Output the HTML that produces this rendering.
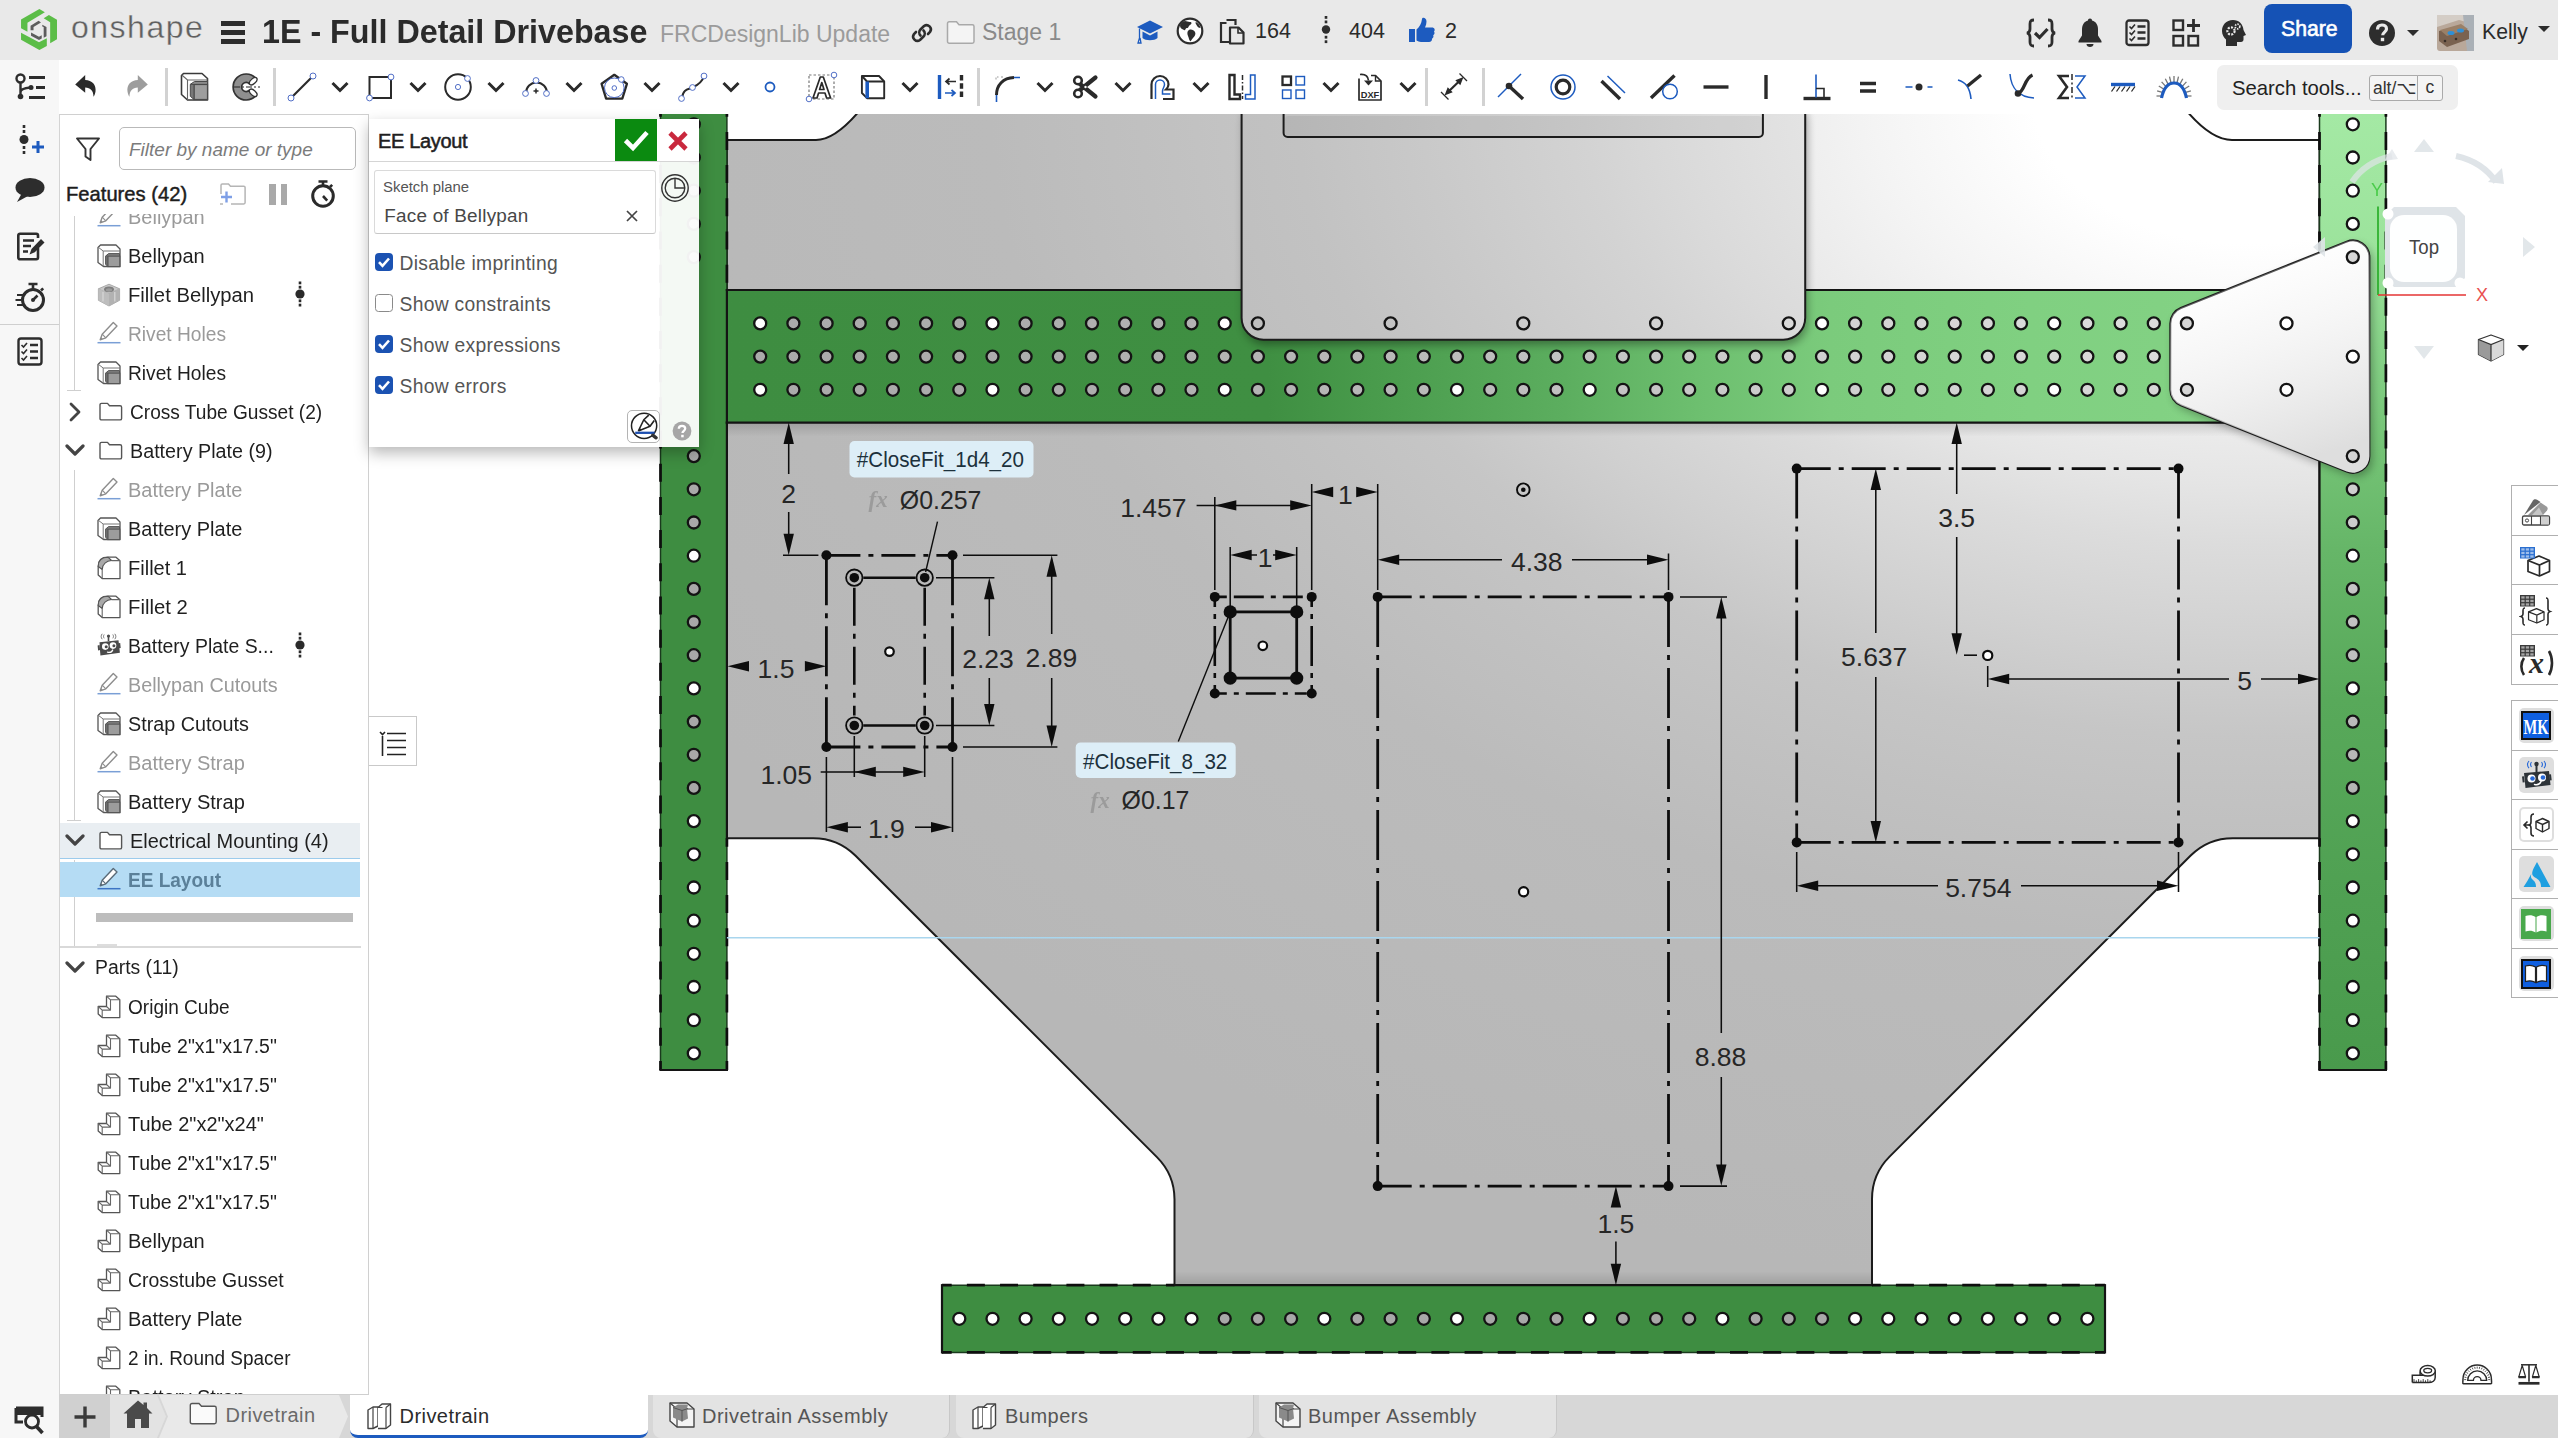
<!DOCTYPE html>
<html><head><meta charset="utf-8"><title>1E - Full Detail Drivebase</title>
<style>
*{box-sizing:border-box;margin:0;padding:0}
html,body{width:2558px;height:1438px;overflow:hidden;background:#fff;font-family:'Liberation Sans',sans-serif;color:#222;}
.abs{position:absolute}
.t{position:absolute;white-space:nowrap;line-height:1}
#hdr{position:absolute;left:0;top:0;width:2558px;height:60px;background:#e9e9e9}
#tb{position:absolute;left:59px;top:60px;width:2499px;height:54px;background:#fff}
#strip{position:absolute;left:0;top:60px;width:59px;height:1378px;background:#f7f7f7}
#panel{position:absolute;left:59px;top:114px;width:310px;height:1281px;background:#fff;border-left:1px solid #d4d4d4;border-right:1px solid #d0d0d0;border-top:1px solid #d0d0d0;border-bottom:1px solid #cfcfcf;overflow:hidden}
#tabs{position:absolute;left:59px;top:1395px;width:2499px;height:43px;background:#d7d7d7}
.row{position:absolute;left:0;width:310px;height:39px}
.row .lbl{position:absolute;left:68px;top:10.1px;font-size:20px;white-space:nowrap;line-height:1;color:#1f1f1f}
.row.f .lbl{left:69.5px}
.row.dim .lbl{color:#9a9a9a}
.row svg{position:absolute}
.ico{position:absolute}
.tab{position:absolute;top:0;height:43px;font-size:21.3px;color:#555}
</style></head>
<body>
<svg id="cv" width="2558" height="1438" viewBox="0 0 2558 1438" style="position:absolute;left:0;top:0">
<defs>
<radialGradient id="gGray" gradientUnits="userSpaceOnUse" cx="2250" cy="100" r="1200" gradientTransform="translate(2250,100) scale(1.5,1) translate(-2250,-100)">
<stop offset="0" stop-color="#ffffff"/><stop offset="0.12" stop-color="#ffffff"/><stop offset="0.21" stop-color="#f4f4f4"/><stop offset="0.32" stop-color="#e5e5e5"/><stop offset="0.37" stop-color="#dcdcdc"/><stop offset="0.46" stop-color="#d0d0d0"/><stop offset="0.53" stop-color="#c6c6c6"/><stop offset="0.6" stop-color="#c1c1c1"/><stop offset="0.7" stop-color="#bbbbbb"/><stop offset="1" stop-color="#b7b7b7"/>
</radialGradient>
<radialGradient id="gPlate" gradientUnits="userSpaceOnUse" cx="2250" cy="100" r="1200" gradientTransform="translate(2250,100) scale(1.5,1) translate(-2250,-100)">
<stop offset="0" stop-color="#f8f8f8"/><stop offset="0.12" stop-color="#f4f4f4"/><stop offset="0.21" stop-color="#e8e8e8"/><stop offset="0.32" stop-color="#dadada"/><stop offset="0.37" stop-color="#d3d3d3"/><stop offset="0.46" stop-color="#c9c9c9"/><stop offset="0.53" stop-color="#c2c2c2"/><stop offset="0.6" stop-color="#bebebe"/><stop offset="0.7" stop-color="#bababa"/><stop offset="1" stop-color="#b7b7b7"/>
</radialGradient>
<radialGradient id="gGreen" gradientUnits="userSpaceOnUse" cx="2300" cy="100" r="1050">
<stop offset="0" stop-color="#a8eea8"/><stop offset="0.095" stop-color="#a2e8a2"/><stop offset="0.196" stop-color="#8ed88e"/><stop offset="0.283" stop-color="#80d080"/><stop offset="0.33" stop-color="#74c476"/><stop offset="0.48" stop-color="#64b566"/><stop offset="0.535" stop-color="#5eae60"/><stop offset="0.72" stop-color="#4fa052"/><stop offset="0.877" stop-color="#459648"/><stop offset="1" stop-color="#3e8d41"/>
</radialGradient>
<radialGradient id="gHole" gradientUnits="userSpaceOnUse" cx="2250" cy="100" r="1200" gradientTransform="translate(2250,100) scale(1.5,1) translate(-2250,-100)">
<stop offset="0" stop-color="#e6e6e6"/><stop offset="0.2" stop-color="#dcdcdc"/><stop offset="0.35" stop-color="#cdcdcd"/><stop offset="0.5" stop-color="#bbbbbb"/><stop offset="0.7" stop-color="#adadad"/><stop offset="1" stop-color="#a8a8a8"/>
</radialGradient>
<linearGradient id="gCross" x1="0" y1="0" x2="1" y2="0">
<stop offset="0" stop-color="#3e8d41"/><stop offset="0.34" stop-color="#3f8f42"/><stop offset="0.40" stop-color="#489a4b"/><stop offset="0.526" stop-color="#5cae5f"/><stop offset="0.609" stop-color="#6dbf6f"/><stop offset="0.693" stop-color="#7bcb7c"/><stop offset="0.818" stop-color="#80d081"/><stop offset="0.9" stop-color="#82d183"/><stop offset="1" stop-color="#88d688"/>
</linearGradient>
<linearGradient id="gRightT" x1="0" y1="0" x2="0" y2="1">
<stop offset="0" stop-color="#a6eaa6"/><stop offset="0.024" stop-color="#a4e9a4"/><stop offset="0.163" stop-color="#9ce39c"/><stop offset="0.265" stop-color="#86d287"/><stop offset="0.367" stop-color="#74c375"/><stop offset="0.469" stop-color="#66b668"/><stop offset="0.622" stop-color="#58a95a"/><stop offset="0.827" stop-color="#4fa052"/><stop offset="1" stop-color="#499a4c"/>
</linearGradient>
<filter id="sh" x="-5%" y="-5%" width="110%" height="120%"><feGaussianBlur stdDeviation="4"/></filter>
<clipPath id="cvclip"><rect x="369" y="114" width="2189" height="1281"/></clipPath>
<linearGradient id="gGus" x1="0.2" y1="0" x2="0.5" y2="1"><stop offset="0" stop-color="#fff" stop-opacity="0"/><stop offset="0.35" stop-color="#f4f4f4" stop-opacity="0.5"/><stop offset="1" stop-color="#dedede" stop-opacity="1"/></linearGradient><linearGradient id="gShV" x1="0" y1="0" x2="0" y2="1"><stop offset="0" stop-color="#000" stop-opacity="0"/><stop offset="1" stop-color="#000" stop-opacity="0.13"/></linearGradient><linearGradient id="gShV2" x1="0" y1="0" x2="0" y2="1"><stop offset="0" stop-color="#000" stop-opacity="0.14"/><stop offset="1" stop-color="#000" stop-opacity="0"/></linearGradient></defs>
<g clip-path="url(#cvclip)">
<rect x="369" y="114" width="2189" height="1281" fill="#ffffff"/>
<path d="M726.9,140.0 L816,140.0 Q838,140.0 868,100 L2178,100 Q2208,140.0 2232,140.0 L2319.5,140.0 L2319.5,838.2 L2232.8528137423855,838.2 A60.0,60.0 0 0 0 2190.4264068711927,855.7735931288072 L1889.5735931288073,1156.626406871193 A60.0,60.0 0 0 0 1872.0,1199.0528137423858 L1872.0,1290.2 L1174.5,1290.2 L1174.5,1199.5528137423858 A60.0,60.0 0 0 0 1156.9264068711927,1157.126406871193 L855.5735931288071,855.7735931288072 A60.0,60.0 0 0 0 813.1471862576143,838.2 L726.9,838.2Z" fill="url(#gGray)" stroke="#1c1c1c" stroke-width="2"/>
<rect x="726.9" y="422.6" width="1592.6" height="14" fill="url(#gShV2)"/>
<rect x="1175.5" y="1271.2" width="695.5" height="14" fill="url(#gShV)"/>
<rect x="660.5" y="90.0" width="66.4" height="980.0" fill="#3e8d41"/>
<line x1="660.5" y1="90.0" x2="660.5" y2="1070.0" stroke="#1a3a1d" stroke-width="1.5"/>
<line x1="660.5" y1="90.0" x2="660.5" y2="1070.0" stroke="#0e0e0e" stroke-width="2.7" stroke-dasharray="18 15.18" stroke-dashoffset="24.43"/>
<line x1="726.9" y1="90.0" x2="726.9" y2="290.0" stroke="#1a3a1d" stroke-width="1.5"/>
<line x1="726.9" y1="90.0" x2="726.9" y2="290.0" stroke="#0e0e0e" stroke-width="2.7" stroke-dasharray="18 15.18" stroke-dashoffset="24.43"/>
<line x1="726.9" y1="422.6" x2="726.9" y2="838.2" stroke="#141414" stroke-width="2.2" stroke-linecap="square"/>
<line x1="726.9" y1="838.2" x2="726.9" y2="1070.0" stroke="#1a3a1d" stroke-width="1.5"/>
<line x1="726.9" y1="838.2" x2="726.9" y2="1070.0" stroke="#0e0e0e" stroke-width="2.7" stroke-dasharray="18 15.18" stroke-dashoffset="9.49"/>
<line x1="660.5" y1="1070.0" x2="726.9" y2="1070.0" stroke="#141414" stroke-width="2.2" stroke-linecap="square"/>
<rect x="2319.5" y="90.0" width="66.4" height="980.0" fill="url(#gRightT)"/>
<line x1="2385.9" y1="90.0" x2="2385.9" y2="1070.0" stroke="#1a3a1d" stroke-width="1.5"/>
<line x1="2385.9" y1="90.0" x2="2385.9" y2="1070.0" stroke="#0e0e0e" stroke-width="2.7" stroke-dasharray="18 15.18" stroke-dashoffset="24.43"/>
<line x1="2319.5" y1="90.0" x2="2319.5" y2="290.0" stroke="#1a3a1d" stroke-width="1.5"/>
<line x1="2319.5" y1="90.0" x2="2319.5" y2="290.0" stroke="#0e0e0e" stroke-width="2.7" stroke-dasharray="18 15.18" stroke-dashoffset="24.43"/>
<line x1="2319.5" y1="422.6" x2="2319.5" y2="838.2" stroke="#141414" stroke-width="2.2" stroke-linecap="square"/>
<line x1="2319.5" y1="838.2" x2="2319.5" y2="1070.0" stroke="#1a3a1d" stroke-width="1.5"/>
<line x1="2319.5" y1="838.2" x2="2319.5" y2="1070.0" stroke="#0e0e0e" stroke-width="2.7" stroke-dasharray="18 15.18" stroke-dashoffset="9.49"/>
<line x1="2319.5" y1="1070.0" x2="2385.9" y2="1070.0" stroke="#141414" stroke-width="2.2" stroke-linecap="square"/>
<rect x="726.9" y="290.0" width="1592.6" height="132.6" fill="url(#gCross)"/>
<line x1="726.9" y1="290.0" x2="2319.5" y2="290.0" stroke="#141414" stroke-width="2.2" stroke-linecap="square"/>
<line x1="726.9" y1="422.6" x2="2319.5" y2="422.6" stroke="#141414" stroke-width="2.2" stroke-linecap="square"/>
<line x1="726.9" y1="290.0" x2="726.9" y2="422.6" stroke="#141414" stroke-width="2.2" stroke-linecap="square"/>
<line x1="2319.5" y1="290.0" x2="2319.5" y2="422.6" stroke="#141414" stroke-width="2.2" stroke-linecap="square"/>
<rect x="942.0" y="1285.2" width="1163.0" height="67.2" fill="#3e8d41"/>
<line x1="942.0" y1="1285.2" x2="1174.5" y2="1285.2" stroke="#1a3a1d" stroke-width="1.5"/>
<line x1="942.0" y1="1285.2" x2="1174.5" y2="1285.2" stroke="#0e0e0e" stroke-width="2.7" stroke-dasharray="18 15.18" stroke-dashoffset="8.31"/>
<line x1="1174.5" y1="1285.2" x2="1872.0" y2="1285.2" stroke="#141414" stroke-width="2.2" stroke-linecap="square"/>
<line x1="1872.0" y1="1285.2" x2="2105.0" y2="1285.2" stroke="#1a3a1d" stroke-width="1.5"/>
<line x1="1872.0" y1="1285.2" x2="2105.0" y2="1285.2" stroke="#0e0e0e" stroke-width="2.7" stroke-dasharray="18 15.18" stroke-dashoffset="9.27"/>
<line x1="942.0" y1="1352.4" x2="2105.0" y2="1352.4" stroke="#1a3a1d" stroke-width="1.5"/>
<line x1="942.0" y1="1352.4" x2="2105.0" y2="1352.4" stroke="#0e0e0e" stroke-width="2.7" stroke-dasharray="18 15.18" stroke-dashoffset="8.31"/>
<line x1="942.0" y1="1285.2" x2="942.0" y2="1352.4" stroke="#141414" stroke-width="2.2" stroke-linecap="square"/>
<line x1="2105.0" y1="1285.2" x2="2105.0" y2="1352.4" stroke="#141414" stroke-width="2.2" stroke-linecap="square"/>
<rect x="1243.6" y="100" width="563.6000000000001" height="244.7" rx="22" fill="#000" opacity="0.35" filter="url(#sh)"/>
<rect x="1241.6" y="60" width="563.6000000000001" height="279.7" rx="22" fill="url(#gPlate)" stroke="#1c1c1c" stroke-width="2"/>
<rect x="1283.6" y="60" width="479.3000000000002" height="77" rx="4" fill="url(#gPlate)" stroke="#1c1c1c" stroke-width="2"/>
<rect x="1285" y="116" width="477" height="20" rx="3" fill="#000" opacity="0.06"/>
<circle cx="760.2" cy="323.4" r="6.0" fill="#ffffff" stroke="#141414" stroke-width="2.3"/>
<circle cx="793.4" cy="323.4" r="6.0" fill="url(#gHole)" stroke="#141414" stroke-width="2.3"/>
<circle cx="826.6" cy="323.4" r="6.0" fill="url(#gHole)" stroke="#141414" stroke-width="2.3"/>
<circle cx="859.7" cy="323.4" r="6.0" fill="url(#gHole)" stroke="#141414" stroke-width="2.3"/>
<circle cx="892.9" cy="323.4" r="6.0" fill="url(#gHole)" stroke="#141414" stroke-width="2.3"/>
<circle cx="926.1" cy="323.4" r="6.0" fill="url(#gHole)" stroke="#141414" stroke-width="2.3"/>
<circle cx="959.3" cy="323.4" r="6.0" fill="url(#gHole)" stroke="#141414" stroke-width="2.3"/>
<circle cx="992.5" cy="323.4" r="6.0" fill="#ffffff" stroke="#141414" stroke-width="2.3"/>
<circle cx="1025.6" cy="323.4" r="6.0" fill="url(#gHole)" stroke="#141414" stroke-width="2.3"/>
<circle cx="1058.8" cy="323.4" r="6.0" fill="url(#gHole)" stroke="#141414" stroke-width="2.3"/>
<circle cx="1092.0" cy="323.4" r="6.0" fill="url(#gHole)" stroke="#141414" stroke-width="2.3"/>
<circle cx="1125.2" cy="323.4" r="6.0" fill="url(#gHole)" stroke="#141414" stroke-width="2.3"/>
<circle cx="1158.4" cy="323.4" r="6.0" fill="url(#gHole)" stroke="#141414" stroke-width="2.3"/>
<circle cx="1191.5" cy="323.4" r="6.0" fill="url(#gHole)" stroke="#141414" stroke-width="2.3"/>
<circle cx="1224.7" cy="323.4" r="6.0" fill="#ffffff" stroke="#141414" stroke-width="2.3"/>
<circle cx="1822.0" cy="323.4" r="6.0" fill="#ffffff" stroke="#141414" stroke-width="2.3"/>
<circle cx="1855.1" cy="323.4" r="6.0" fill="url(#gHole)" stroke="#141414" stroke-width="2.3"/>
<circle cx="1888.3" cy="323.4" r="6.0" fill="url(#gHole)" stroke="#141414" stroke-width="2.3"/>
<circle cx="1921.5" cy="323.4" r="6.0" fill="url(#gHole)" stroke="#141414" stroke-width="2.3"/>
<circle cx="1954.7" cy="323.4" r="6.0" fill="url(#gHole)" stroke="#141414" stroke-width="2.3"/>
<circle cx="1987.9" cy="323.4" r="6.0" fill="url(#gHole)" stroke="#141414" stroke-width="2.3"/>
<circle cx="2021.0" cy="323.4" r="6.0" fill="url(#gHole)" stroke="#141414" stroke-width="2.3"/>
<circle cx="2054.2" cy="323.4" r="6.0" fill="#ffffff" stroke="#141414" stroke-width="2.3"/>
<circle cx="2087.4" cy="323.4" r="6.0" fill="url(#gHole)" stroke="#141414" stroke-width="2.3"/>
<circle cx="2120.6" cy="323.4" r="6.0" fill="url(#gHole)" stroke="#141414" stroke-width="2.3"/>
<circle cx="2153.8" cy="323.4" r="6.0" fill="url(#gHole)" stroke="#141414" stroke-width="2.3"/>
<circle cx="760.2" cy="356.6" r="6.0" fill="url(#gHole)" stroke="#141414" stroke-width="2.3"/>
<circle cx="793.4" cy="356.6" r="6.0" fill="url(#gHole)" stroke="#141414" stroke-width="2.3"/>
<circle cx="826.6" cy="356.6" r="6.0" fill="url(#gHole)" stroke="#141414" stroke-width="2.3"/>
<circle cx="859.7" cy="356.6" r="6.0" fill="url(#gHole)" stroke="#141414" stroke-width="2.3"/>
<circle cx="892.9" cy="356.6" r="6.0" fill="url(#gHole)" stroke="#141414" stroke-width="2.3"/>
<circle cx="926.1" cy="356.6" r="6.0" fill="url(#gHole)" stroke="#141414" stroke-width="2.3"/>
<circle cx="959.3" cy="356.6" r="6.0" fill="url(#gHole)" stroke="#141414" stroke-width="2.3"/>
<circle cx="992.5" cy="356.6" r="6.0" fill="url(#gHole)" stroke="#141414" stroke-width="2.3"/>
<circle cx="1025.6" cy="356.6" r="6.0" fill="url(#gHole)" stroke="#141414" stroke-width="2.3"/>
<circle cx="1058.8" cy="356.6" r="6.0" fill="url(#gHole)" stroke="#141414" stroke-width="2.3"/>
<circle cx="1092.0" cy="356.6" r="6.0" fill="url(#gHole)" stroke="#141414" stroke-width="2.3"/>
<circle cx="1125.2" cy="356.6" r="6.0" fill="url(#gHole)" stroke="#141414" stroke-width="2.3"/>
<circle cx="1158.4" cy="356.6" r="6.0" fill="url(#gHole)" stroke="#141414" stroke-width="2.3"/>
<circle cx="1191.5" cy="356.6" r="6.0" fill="url(#gHole)" stroke="#141414" stroke-width="2.3"/>
<circle cx="1224.7" cy="356.6" r="6.0" fill="url(#gHole)" stroke="#141414" stroke-width="2.3"/>
<circle cx="1257.9" cy="356.6" r="6.0" fill="url(#gHole)" stroke="#141414" stroke-width="2.3"/>
<circle cx="1291.1" cy="356.6" r="6.0" fill="url(#gHole)" stroke="#141414" stroke-width="2.3"/>
<circle cx="1324.3" cy="356.6" r="6.0" fill="url(#gHole)" stroke="#141414" stroke-width="2.3"/>
<circle cx="1357.4" cy="356.6" r="6.0" fill="url(#gHole)" stroke="#141414" stroke-width="2.3"/>
<circle cx="1390.6" cy="356.6" r="6.0" fill="url(#gHole)" stroke="#141414" stroke-width="2.3"/>
<circle cx="1423.8" cy="356.6" r="6.0" fill="url(#gHole)" stroke="#141414" stroke-width="2.3"/>
<circle cx="1457.0" cy="356.6" r="6.0" fill="url(#gHole)" stroke="#141414" stroke-width="2.3"/>
<circle cx="1490.2" cy="356.6" r="6.0" fill="url(#gHole)" stroke="#141414" stroke-width="2.3"/>
<circle cx="1523.3" cy="356.6" r="6.0" fill="url(#gHole)" stroke="#141414" stroke-width="2.3"/>
<circle cx="1556.5" cy="356.6" r="6.0" fill="url(#gHole)" stroke="#141414" stroke-width="2.3"/>
<circle cx="1589.7" cy="356.6" r="6.0" fill="url(#gHole)" stroke="#141414" stroke-width="2.3"/>
<circle cx="1622.9" cy="356.6" r="6.0" fill="url(#gHole)" stroke="#141414" stroke-width="2.3"/>
<circle cx="1656.1" cy="356.6" r="6.0" fill="url(#gHole)" stroke="#141414" stroke-width="2.3"/>
<circle cx="1689.2" cy="356.6" r="6.0" fill="url(#gHole)" stroke="#141414" stroke-width="2.3"/>
<circle cx="1722.4" cy="356.6" r="6.0" fill="url(#gHole)" stroke="#141414" stroke-width="2.3"/>
<circle cx="1755.6" cy="356.6" r="6.0" fill="url(#gHole)" stroke="#141414" stroke-width="2.3"/>
<circle cx="1788.8" cy="356.6" r="6.0" fill="url(#gHole)" stroke="#141414" stroke-width="2.3"/>
<circle cx="1822.0" cy="356.6" r="6.0" fill="url(#gHole)" stroke="#141414" stroke-width="2.3"/>
<circle cx="1855.1" cy="356.6" r="6.0" fill="url(#gHole)" stroke="#141414" stroke-width="2.3"/>
<circle cx="1888.3" cy="356.6" r="6.0" fill="url(#gHole)" stroke="#141414" stroke-width="2.3"/>
<circle cx="1921.5" cy="356.6" r="6.0" fill="url(#gHole)" stroke="#141414" stroke-width="2.3"/>
<circle cx="1954.7" cy="356.6" r="6.0" fill="url(#gHole)" stroke="#141414" stroke-width="2.3"/>
<circle cx="1987.9" cy="356.6" r="6.0" fill="url(#gHole)" stroke="#141414" stroke-width="2.3"/>
<circle cx="2021.0" cy="356.6" r="6.0" fill="url(#gHole)" stroke="#141414" stroke-width="2.3"/>
<circle cx="2054.2" cy="356.6" r="6.0" fill="url(#gHole)" stroke="#141414" stroke-width="2.3"/>
<circle cx="2087.4" cy="356.6" r="6.0" fill="url(#gHole)" stroke="#141414" stroke-width="2.3"/>
<circle cx="2120.6" cy="356.6" r="6.0" fill="url(#gHole)" stroke="#141414" stroke-width="2.3"/>
<circle cx="2153.8" cy="356.6" r="6.0" fill="url(#gHole)" stroke="#141414" stroke-width="2.3"/>
<circle cx="760.2" cy="389.8" r="6.0" fill="#ffffff" stroke="#141414" stroke-width="2.3"/>
<circle cx="793.4" cy="389.8" r="6.0" fill="url(#gHole)" stroke="#141414" stroke-width="2.3"/>
<circle cx="826.6" cy="389.8" r="6.0" fill="url(#gHole)" stroke="#141414" stroke-width="2.3"/>
<circle cx="859.7" cy="389.8" r="6.0" fill="url(#gHole)" stroke="#141414" stroke-width="2.3"/>
<circle cx="892.9" cy="389.8" r="6.0" fill="url(#gHole)" stroke="#141414" stroke-width="2.3"/>
<circle cx="926.1" cy="389.8" r="6.0" fill="url(#gHole)" stroke="#141414" stroke-width="2.3"/>
<circle cx="959.3" cy="389.8" r="6.0" fill="url(#gHole)" stroke="#141414" stroke-width="2.3"/>
<circle cx="992.5" cy="389.8" r="6.0" fill="#ffffff" stroke="#141414" stroke-width="2.3"/>
<circle cx="1025.6" cy="389.8" r="6.0" fill="url(#gHole)" stroke="#141414" stroke-width="2.3"/>
<circle cx="1058.8" cy="389.8" r="6.0" fill="url(#gHole)" stroke="#141414" stroke-width="2.3"/>
<circle cx="1092.0" cy="389.8" r="6.0" fill="url(#gHole)" stroke="#141414" stroke-width="2.3"/>
<circle cx="1125.2" cy="389.8" r="6.0" fill="url(#gHole)" stroke="#141414" stroke-width="2.3"/>
<circle cx="1158.4" cy="389.8" r="6.0" fill="url(#gHole)" stroke="#141414" stroke-width="2.3"/>
<circle cx="1191.5" cy="389.8" r="6.0" fill="url(#gHole)" stroke="#141414" stroke-width="2.3"/>
<circle cx="1224.7" cy="389.8" r="6.0" fill="#ffffff" stroke="#141414" stroke-width="2.3"/>
<circle cx="1257.9" cy="389.8" r="6.0" fill="url(#gHole)" stroke="#141414" stroke-width="2.3"/>
<circle cx="1291.1" cy="389.8" r="6.0" fill="url(#gHole)" stroke="#141414" stroke-width="2.3"/>
<circle cx="1324.3" cy="389.8" r="6.0" fill="url(#gHole)" stroke="#141414" stroke-width="2.3"/>
<circle cx="1357.4" cy="389.8" r="6.0" fill="url(#gHole)" stroke="#141414" stroke-width="2.3"/>
<circle cx="1390.6" cy="389.8" r="6.0" fill="url(#gHole)" stroke="#141414" stroke-width="2.3"/>
<circle cx="1423.8" cy="389.8" r="6.0" fill="url(#gHole)" stroke="#141414" stroke-width="2.3"/>
<circle cx="1457.0" cy="389.8" r="6.0" fill="#ffffff" stroke="#141414" stroke-width="2.3"/>
<circle cx="1490.2" cy="389.8" r="6.0" fill="url(#gHole)" stroke="#141414" stroke-width="2.3"/>
<circle cx="1523.3" cy="389.8" r="6.0" fill="url(#gHole)" stroke="#141414" stroke-width="2.3"/>
<circle cx="1556.5" cy="389.8" r="6.0" fill="url(#gHole)" stroke="#141414" stroke-width="2.3"/>
<circle cx="1589.7" cy="389.8" r="6.0" fill="#ffffff" stroke="#141414" stroke-width="2.3"/>
<circle cx="1622.9" cy="389.8" r="6.0" fill="url(#gHole)" stroke="#141414" stroke-width="2.3"/>
<circle cx="1656.1" cy="389.8" r="6.0" fill="url(#gHole)" stroke="#141414" stroke-width="2.3"/>
<circle cx="1689.2" cy="389.8" r="6.0" fill="url(#gHole)" stroke="#141414" stroke-width="2.3"/>
<circle cx="1722.4" cy="389.8" r="6.0" fill="url(#gHole)" stroke="#141414" stroke-width="2.3"/>
<circle cx="1755.6" cy="389.8" r="6.0" fill="url(#gHole)" stroke="#141414" stroke-width="2.3"/>
<circle cx="1788.8" cy="389.8" r="6.0" fill="url(#gHole)" stroke="#141414" stroke-width="2.3"/>
<circle cx="1822.0" cy="389.8" r="6.0" fill="#ffffff" stroke="#141414" stroke-width="2.3"/>
<circle cx="1855.1" cy="389.8" r="6.0" fill="url(#gHole)" stroke="#141414" stroke-width="2.3"/>
<circle cx="1888.3" cy="389.8" r="6.0" fill="url(#gHole)" stroke="#141414" stroke-width="2.3"/>
<circle cx="1921.5" cy="389.8" r="6.0" fill="url(#gHole)" stroke="#141414" stroke-width="2.3"/>
<circle cx="1954.7" cy="389.8" r="6.0" fill="url(#gHole)" stroke="#141414" stroke-width="2.3"/>
<circle cx="1987.9" cy="389.8" r="6.0" fill="url(#gHole)" stroke="#141414" stroke-width="2.3"/>
<circle cx="2021.0" cy="389.8" r="6.0" fill="url(#gHole)" stroke="#141414" stroke-width="2.3"/>
<circle cx="2054.2" cy="389.8" r="6.0" fill="#ffffff" stroke="#141414" stroke-width="2.3"/>
<circle cx="2087.4" cy="389.8" r="6.0" fill="url(#gHole)" stroke="#141414" stroke-width="2.3"/>
<circle cx="2120.6" cy="389.8" r="6.0" fill="url(#gHole)" stroke="#141414" stroke-width="2.3"/>
<circle cx="2153.8" cy="389.8" r="6.0" fill="url(#gHole)" stroke="#141414" stroke-width="2.3"/>
<circle cx="1257.9" cy="323.4" r="6.0" fill="url(#gPlate)" stroke="#141414" stroke-width="2.3"/>
<circle cx="1390.6" cy="323.4" r="6.0" fill="url(#gPlate)" stroke="#141414" stroke-width="2.3"/>
<circle cx="1523.3" cy="323.4" r="6.0" fill="url(#gPlate)" stroke="#141414" stroke-width="2.3"/>
<circle cx="1656.1" cy="323.4" r="6.0" fill="url(#gPlate)" stroke="#141414" stroke-width="2.3"/>
<circle cx="1788.8" cy="323.4" r="6.0" fill="url(#gPlate)" stroke="#141414" stroke-width="2.3"/>
<circle cx="693.8" cy="124.3" r="6.0" fill="url(#gHole)" stroke="#141414" stroke-width="2.3"/>
<circle cx="2352.8" cy="124.3" r="6.0" fill="#ffffff" stroke="#141414" stroke-width="2.3"/>
<circle cx="693.8" cy="157.5" r="6.0" fill="url(#gHole)" stroke="#141414" stroke-width="2.3"/>
<circle cx="2352.8" cy="157.5" r="6.0" fill="#ffffff" stroke="#141414" stroke-width="2.3"/>
<circle cx="693.8" cy="190.7" r="6.0" fill="url(#gHole)" stroke="#141414" stroke-width="2.3"/>
<circle cx="2352.8" cy="190.7" r="6.0" fill="#ffffff" stroke="#141414" stroke-width="2.3"/>
<circle cx="693.8" cy="223.9" r="6.0" fill="url(#gHole)" stroke="#141414" stroke-width="2.3"/>
<circle cx="2352.8" cy="223.9" r="6.0" fill="#ffffff" stroke="#141414" stroke-width="2.3"/>
<circle cx="693.8" cy="257.1" r="6.0" fill="url(#gHole)" stroke="#141414" stroke-width="2.3"/>
<circle cx="693.8" cy="456.1" r="6.0" fill="url(#gHole)" stroke="#141414" stroke-width="2.3"/>
<circle cx="693.8" cy="489.3" r="6.0" fill="url(#gHole)" stroke="#141414" stroke-width="2.3"/>
<circle cx="2352.8" cy="489.3" r="6.0" fill="url(#gHole)" stroke="#141414" stroke-width="2.3"/>
<circle cx="693.8" cy="522.5" r="6.0" fill="url(#gHole)" stroke="#141414" stroke-width="2.3"/>
<circle cx="2352.8" cy="522.5" r="6.0" fill="url(#gHole)" stroke="#141414" stroke-width="2.3"/>
<circle cx="693.8" cy="555.7" r="6.0" fill="#ffffff" stroke="#141414" stroke-width="2.3"/>
<circle cx="2352.8" cy="555.7" r="6.0" fill="#ffffff" stroke="#141414" stroke-width="2.3"/>
<circle cx="693.8" cy="588.9" r="6.0" fill="url(#gHole)" stroke="#141414" stroke-width="2.3"/>
<circle cx="2352.8" cy="588.9" r="6.0" fill="url(#gHole)" stroke="#141414" stroke-width="2.3"/>
<circle cx="693.8" cy="622.0" r="6.0" fill="url(#gHole)" stroke="#141414" stroke-width="2.3"/>
<circle cx="2352.8" cy="622.0" r="6.0" fill="url(#gHole)" stroke="#141414" stroke-width="2.3"/>
<circle cx="693.8" cy="655.2" r="6.0" fill="url(#gHole)" stroke="#141414" stroke-width="2.3"/>
<circle cx="2352.8" cy="655.2" r="6.0" fill="url(#gHole)" stroke="#141414" stroke-width="2.3"/>
<circle cx="693.8" cy="688.4" r="6.0" fill="#ffffff" stroke="#141414" stroke-width="2.3"/>
<circle cx="2352.8" cy="688.4" r="6.0" fill="#ffffff" stroke="#141414" stroke-width="2.3"/>
<circle cx="693.8" cy="721.6" r="6.0" fill="url(#gHole)" stroke="#141414" stroke-width="2.3"/>
<circle cx="2352.8" cy="721.6" r="6.0" fill="url(#gHole)" stroke="#141414" stroke-width="2.3"/>
<circle cx="693.8" cy="754.8" r="6.0" fill="url(#gHole)" stroke="#141414" stroke-width="2.3"/>
<circle cx="2352.8" cy="754.8" r="6.0" fill="url(#gHole)" stroke="#141414" stroke-width="2.3"/>
<circle cx="693.8" cy="787.9" r="6.0" fill="url(#gHole)" stroke="#141414" stroke-width="2.3"/>
<circle cx="2352.8" cy="787.9" r="6.0" fill="url(#gHole)" stroke="#141414" stroke-width="2.3"/>
<circle cx="693.8" cy="821.1" r="6.0" fill="#ffffff" stroke="#141414" stroke-width="2.3"/>
<circle cx="2352.8" cy="821.1" r="6.0" fill="#ffffff" stroke="#141414" stroke-width="2.3"/>
<circle cx="693.8" cy="854.3" r="6.0" fill="#ffffff" stroke="#141414" stroke-width="2.3"/>
<circle cx="2352.8" cy="854.3" r="6.0" fill="#ffffff" stroke="#141414" stroke-width="2.3"/>
<circle cx="693.8" cy="887.5" r="6.0" fill="#ffffff" stroke="#141414" stroke-width="2.3"/>
<circle cx="2352.8" cy="887.5" r="6.0" fill="#ffffff" stroke="#141414" stroke-width="2.3"/>
<circle cx="693.8" cy="920.7" r="6.0" fill="#ffffff" stroke="#141414" stroke-width="2.3"/>
<circle cx="2352.8" cy="920.7" r="6.0" fill="#ffffff" stroke="#141414" stroke-width="2.3"/>
<circle cx="693.8" cy="953.8" r="6.0" fill="#ffffff" stroke="#141414" stroke-width="2.3"/>
<circle cx="2352.8" cy="953.8" r="6.0" fill="#ffffff" stroke="#141414" stroke-width="2.3"/>
<circle cx="693.8" cy="987.0" r="6.0" fill="#ffffff" stroke="#141414" stroke-width="2.3"/>
<circle cx="2352.8" cy="987.0" r="6.0" fill="#ffffff" stroke="#141414" stroke-width="2.3"/>
<circle cx="693.8" cy="1020.2" r="6.0" fill="#ffffff" stroke="#141414" stroke-width="2.3"/>
<circle cx="2352.8" cy="1020.2" r="6.0" fill="#ffffff" stroke="#141414" stroke-width="2.3"/>
<circle cx="693.8" cy="1053.4" r="6.0" fill="#ffffff" stroke="#141414" stroke-width="2.3"/>
<circle cx="2352.8" cy="1053.4" r="6.0" fill="#ffffff" stroke="#141414" stroke-width="2.3"/>
<circle cx="959.3" cy="1318.8" r="6.0" fill="#ffffff" stroke="#141414" stroke-width="2.3"/>
<circle cx="992.5" cy="1318.8" r="6.0" fill="#ffffff" stroke="#141414" stroke-width="2.3"/>
<circle cx="1025.6" cy="1318.8" r="6.0" fill="#ffffff" stroke="#141414" stroke-width="2.3"/>
<circle cx="1058.8" cy="1318.8" r="6.0" fill="#ffffff" stroke="#141414" stroke-width="2.3"/>
<circle cx="1092.0" cy="1318.8" r="6.0" fill="#ffffff" stroke="#141414" stroke-width="2.3"/>
<circle cx="1125.2" cy="1318.8" r="6.0" fill="#ffffff" stroke="#141414" stroke-width="2.3"/>
<circle cx="1158.4" cy="1318.8" r="6.0" fill="#ffffff" stroke="#141414" stroke-width="2.3"/>
<circle cx="1191.5" cy="1318.8" r="6.0" fill="#ffffff" stroke="#141414" stroke-width="2.3"/>
<circle cx="1224.7" cy="1318.8" r="6.0" fill="url(#gHole)" stroke="#141414" stroke-width="2.3"/>
<circle cx="1257.9" cy="1318.8" r="6.0" fill="url(#gHole)" stroke="#141414" stroke-width="2.3"/>
<circle cx="1291.1" cy="1318.8" r="6.0" fill="url(#gHole)" stroke="#141414" stroke-width="2.3"/>
<circle cx="1324.3" cy="1318.8" r="6.0" fill="#ffffff" stroke="#141414" stroke-width="2.3"/>
<circle cx="1357.4" cy="1318.8" r="6.0" fill="url(#gHole)" stroke="#141414" stroke-width="2.3"/>
<circle cx="1390.6" cy="1318.8" r="6.0" fill="url(#gHole)" stroke="#141414" stroke-width="2.3"/>
<circle cx="1423.8" cy="1318.8" r="6.0" fill="url(#gHole)" stroke="#141414" stroke-width="2.3"/>
<circle cx="1457.0" cy="1318.8" r="6.0" fill="#ffffff" stroke="#141414" stroke-width="2.3"/>
<circle cx="1490.2" cy="1318.8" r="6.0" fill="url(#gHole)" stroke="#141414" stroke-width="2.3"/>
<circle cx="1523.3" cy="1318.8" r="6.0" fill="url(#gHole)" stroke="#141414" stroke-width="2.3"/>
<circle cx="1556.5" cy="1318.8" r="6.0" fill="url(#gHole)" stroke="#141414" stroke-width="2.3"/>
<circle cx="1589.7" cy="1318.8" r="6.0" fill="#ffffff" stroke="#141414" stroke-width="2.3"/>
<circle cx="1622.9" cy="1318.8" r="6.0" fill="url(#gHole)" stroke="#141414" stroke-width="2.3"/>
<circle cx="1656.1" cy="1318.8" r="6.0" fill="url(#gHole)" stroke="#141414" stroke-width="2.3"/>
<circle cx="1689.2" cy="1318.8" r="6.0" fill="url(#gHole)" stroke="#141414" stroke-width="2.3"/>
<circle cx="1722.4" cy="1318.8" r="6.0" fill="#ffffff" stroke="#141414" stroke-width="2.3"/>
<circle cx="1755.6" cy="1318.8" r="6.0" fill="url(#gHole)" stroke="#141414" stroke-width="2.3"/>
<circle cx="1788.8" cy="1318.8" r="6.0" fill="url(#gHole)" stroke="#141414" stroke-width="2.3"/>
<circle cx="1822.0" cy="1318.8" r="6.0" fill="url(#gHole)" stroke="#141414" stroke-width="2.3"/>
<circle cx="1855.1" cy="1318.8" r="6.0" fill="#ffffff" stroke="#141414" stroke-width="2.3"/>
<circle cx="1888.3" cy="1318.8" r="6.0" fill="#ffffff" stroke="#141414" stroke-width="2.3"/>
<circle cx="1921.5" cy="1318.8" r="6.0" fill="#ffffff" stroke="#141414" stroke-width="2.3"/>
<circle cx="1954.7" cy="1318.8" r="6.0" fill="#ffffff" stroke="#141414" stroke-width="2.3"/>
<circle cx="1987.9" cy="1318.8" r="6.0" fill="#ffffff" stroke="#141414" stroke-width="2.3"/>
<circle cx="2021.0" cy="1318.8" r="6.0" fill="#ffffff" stroke="#141414" stroke-width="2.3"/>
<circle cx="2054.2" cy="1318.8" r="6.0" fill="#ffffff" stroke="#141414" stroke-width="2.3"/>
<circle cx="2087.4" cy="1318.8" r="6.0" fill="#ffffff" stroke="#141414" stroke-width="2.3"/>
<path d="M2369.4,257.1 L2369.4,456.1 A16.6,16.6 0 0 1 2346.7,471.6 L2180.8,405.2 A16.6,16.6 0 0 1 2170.3,389.8 L2170.3,323.4 A16.6,16.6 0 0 1 2180.8,308.0 L2346.7,241.6 A16.6,16.6 0 0 1 2369.4,257.1Z" transform="translate(3,4)" fill="#000" opacity="0.3" filter="url(#sh)"/>
<path d="M2369.4,257.1 L2369.4,456.1 A16.6,16.6 0 0 1 2346.7,471.6 L2180.8,405.2 A16.6,16.6 0 0 1 2170.3,389.8 L2170.3,323.4 A16.6,16.6 0 0 1 2180.8,308.0 L2346.7,241.6 A16.6,16.6 0 0 1 2369.4,257.1Z" fill="#ffffff" stroke="#1c1c1c" stroke-width="2"/>
<path d="M2369.4,257.1 L2369.4,456.1 A16.6,16.6 0 0 1 2346.7,471.6 L2180.8,405.2 A16.6,16.6 0 0 1 2170.3,389.8 L2170.3,323.4 A16.6,16.6 0 0 1 2180.8,308.0 L2346.7,241.6 A16.6,16.6 0 0 1 2369.4,257.1Z" fill="url(#gGus)" opacity="1"/>
<circle cx="2352.8" cy="257.1" r="6.0" fill="#d6d6d6" stroke="#141414" stroke-width="2.3"/>
<circle cx="2352.8" cy="456.1" r="6.0" fill="#d6d6d6" stroke="#141414" stroke-width="2.3"/>
<circle cx="2186.9" cy="389.8" r="6.0" fill="#d6d6d6" stroke="#141414" stroke-width="2.3"/>
<circle cx="2186.9" cy="323.4" r="6.0" fill="#d6d6d6" stroke="#141414" stroke-width="2.3"/>
<circle cx="2286.5" cy="323.4" r="6.0" fill="#ffffff" stroke="#141414" stroke-width="2.3"/>
<circle cx="2286.5" cy="389.8" r="6.0" fill="#ffffff" stroke="#141414" stroke-width="2.3"/>
<circle cx="2352.8" cy="356.6" r="6.0" fill="#ffffff" stroke="#141414" stroke-width="2.3"/>
<line x1="726.9" y1="937.8" x2="2319.5" y2="937.8" stroke="#a9d6ee" stroke-width="1.6"/>
<g font-family="'Liberation Sans',sans-serif">
<line x1="826.4" y1="555.3" x2="952.5" y2="555.3" stroke="#0d0d0d" stroke-width="2.8" stroke-dasharray="34 8 5 8"/>
<line x1="826.4" y1="747.0" x2="952.5" y2="747.0" stroke="#0d0d0d" stroke-width="2.8" stroke-dasharray="34 8 5 8"/>
<line x1="826.4" y1="555.3" x2="826.4" y2="747.0" stroke="#0d0d0d" stroke-width="2.8" stroke-dasharray="50 8 5 8"/>
<line x1="952.5" y1="555.3" x2="952.5" y2="747.0" stroke="#0d0d0d" stroke-width="2.8" stroke-dasharray="50 8 5 8"/>
<circle cx="826.4" cy="555.3" r="5.0" fill="#0d0d0d"/>
<circle cx="952.5" cy="555.3" r="5.0" fill="#0d0d0d"/>
<circle cx="826.4" cy="747.0" r="5.0" fill="#0d0d0d"/>
<circle cx="952.5" cy="747.0" r="5.0" fill="#0d0d0d"/>
<line x1="854.3" y1="587.7" x2="854.3" y2="715.5" stroke="#0d0d0d" stroke-width="2.6" stroke-dasharray="38 8 5 8"/>
<line x1="924.7" y1="587.7" x2="924.7" y2="715.5" stroke="#0d0d0d" stroke-width="2.6" stroke-dasharray="38 8 5 8"/>
<line x1="863.3" y1="577.7" x2="915.7" y2="577.7" stroke="#0d0d0d" stroke-width="2.6"/>
<line x1="863.3" y1="725.5" x2="915.7" y2="725.5" stroke="#0d0d0d" stroke-width="2.6"/>
<circle cx="854.3" cy="577.7" r="8.2" fill="none" stroke="#0d0d0d" stroke-width="1.8"/>
<circle cx="854.3" cy="577.7" r="4.8" fill="#0d0d0d"/>
<circle cx="924.7" cy="577.7" r="8.2" fill="none" stroke="#0d0d0d" stroke-width="1.8"/>
<circle cx="924.7" cy="577.7" r="4.8" fill="#0d0d0d"/>
<circle cx="854.3" cy="725.5" r="8.2" fill="none" stroke="#0d0d0d" stroke-width="1.8"/>
<circle cx="854.3" cy="725.5" r="4.8" fill="#0d0d0d"/>
<circle cx="924.7" cy="725.5" r="8.2" fill="none" stroke="#0d0d0d" stroke-width="1.8"/>
<circle cx="924.7" cy="725.5" r="4.8" fill="#0d0d0d"/>
<circle cx="889.5" cy="651.6" r="4.3" fill="#fff" stroke="#0d0d0d" stroke-width="2.2"/>
<polygon points="788.7,422.6 783.5,444.1 793.9,444.1" fill="#0d0d0d"/>
<polygon points="788.7,555.3 783.5,533.8 793.9,533.8" fill="#0d0d0d"/>
<line x1="788.7" y1="440.0" x2="788.7" y2="474.0" stroke="#0d0d0d" stroke-width="1.55"/>
<line x1="788.7" y1="512.0" x2="788.7" y2="540.0" stroke="#0d0d0d" stroke-width="1.55"/>
<line x1="783.0" y1="555.3" x2="818.4" y2="555.3" stroke="#0d0d0d" stroke-width="1.55"/>
<text x="788.7" y="502.5" font-size="26.5" text-anchor="middle" fill="#262626">2</text>
<polygon points="727.5,666.3 749.0,661.1 749.0,671.5" fill="#0d0d0d"/>
<polygon points="826.4,666.3 804.9,661.1 804.9,671.5" fill="#0d0d0d"/>
<text x="776.0" y="677.5" font-size="26.5" text-anchor="middle" fill="#262626">1.5</text>
<line x1="963.0" y1="555.3" x2="1057.4" y2="555.3" stroke="#0d0d0d" stroke-width="1.55"/>
<line x1="963.0" y1="747.0" x2="1057.4" y2="747.0" stroke="#0d0d0d" stroke-width="1.55"/>
<polygon points="1051.7,555.3 1046.5,576.8 1056.9,576.8" fill="#0d0d0d"/>
<polygon points="1051.7,747.0 1046.5,725.5 1056.9,725.5" fill="#0d0d0d"/>
<line x1="1051.7" y1="570.3" x2="1051.7" y2="634.0" stroke="#0d0d0d" stroke-width="1.55"/>
<line x1="1051.7" y1="678.0" x2="1051.7" y2="732.0" stroke="#0d0d0d" stroke-width="1.55"/>
<text x="1051.4" y="666.5" font-size="26.5" text-anchor="middle" fill="#262626">2.89</text>
<line x1="936.0" y1="577.7" x2="994.4" y2="577.7" stroke="#0d0d0d" stroke-width="1.55"/>
<line x1="936.0" y1="725.5" x2="994.4" y2="725.5" stroke="#0d0d0d" stroke-width="1.55"/>
<polygon points="989.3,577.7 984.1,599.2 994.5,599.2" fill="#0d0d0d"/>
<polygon points="989.3,725.5 984.1,704.0 994.5,704.0" fill="#0d0d0d"/>
<line x1="989.3" y1="592.7" x2="989.3" y2="636.0" stroke="#0d0d0d" stroke-width="1.55"/>
<line x1="989.3" y1="678.0" x2="989.3" y2="710.5" stroke="#0d0d0d" stroke-width="1.55"/>
<text x="988.0" y="667.8" font-size="26.5" text-anchor="middle" fill="#262626">2.23</text>
<line x1="854.3" y1="736.0" x2="854.3" y2="777.0" stroke="#0d0d0d" stroke-width="1.55"/>
<line x1="924.7" y1="736.0" x2="924.7" y2="777.0" stroke="#0d0d0d" stroke-width="1.55"/>
<polygon points="854.3,771.9 875.8,766.7 875.8,777.1" fill="#0d0d0d"/>
<polygon points="924.7,771.9 903.2,766.7 903.2,777.1" fill="#0d0d0d"/>
<line x1="820.7" y1="771.9" x2="909.7" y2="771.9" stroke="#0d0d0d" stroke-width="1.55"/>
<text x="786.2" y="783.5" font-size="26.5" text-anchor="middle" fill="#262626">1.05</text>
<line x1="826.4" y1="757.0" x2="826.4" y2="832.0" stroke="#0d0d0d" stroke-width="1.55"/>
<line x1="952.5" y1="757.0" x2="952.5" y2="832.0" stroke="#0d0d0d" stroke-width="1.55"/>
<polygon points="826.4,827.2 847.9,822.0 847.9,832.4" fill="#0d0d0d"/>
<polygon points="952.5,827.2 931.0,822.0 931.0,832.4" fill="#0d0d0d"/>
<line x1="841.4" y1="827.2" x2="861.0" y2="827.2" stroke="#0d0d0d" stroke-width="1.55"/>
<line x1="915.0" y1="827.2" x2="937.5" y2="827.2" stroke="#0d0d0d" stroke-width="1.55"/>
<text x="886.3" y="838.3" font-size="26.5" text-anchor="middle" fill="#262626">1.9</text>
<rect x="849.5" y="441" width="184" height="36.5" rx="5" fill="#ddeef7"/>
<text transform="translate(940.4,467.4) scale(0.903,1)" font-size="22.8" text-anchor="middle" fill="#1c313c">#CloseFit_1d4_20</text>
<text x="868.5" y="507" font-size="23" font-style="italic" font-weight="700" font-family="'Liberation Serif',serif" fill="#8f8f8f" opacity="0.7">fx</text>
<text x="899.8" y="508.7" font-size="24.9" fill="#262626">Ø0.257</text>
<line x1="937.5" y1="521.7" x2="925.6" y2="572.0" stroke="#0d0d0d" stroke-width="1.4"/>
<line x1="1214.8" y1="596.9" x2="1311.7" y2="596.9" stroke="#0d0d0d" stroke-width="2.6" stroke-dasharray="12 7 30 7 5 7 20 7"/>
<line x1="1214.8" y1="693.5" x2="1311.7" y2="693.5" stroke="#0d0d0d" stroke-width="2.6" stroke-dasharray="12 7 5 7 30 7 5 7"/>
<line x1="1214.8" y1="596.9" x2="1214.8" y2="693.5" stroke="#0d0d0d" stroke-width="2.6" stroke-dasharray="10 7 5 7 40 7 5 7"/>
<line x1="1311.7" y1="596.9" x2="1311.7" y2="693.5" stroke="#0d0d0d" stroke-width="2.6" stroke-dasharray="10 7 5 7 40 7 5 7"/>
<circle cx="1214.8" cy="596.9" r="5.0" fill="#0d0d0d"/>
<circle cx="1311.7" cy="596.9" r="5.0" fill="#0d0d0d"/>
<circle cx="1214.8" cy="693.5" r="5.0" fill="#0d0d0d"/>
<circle cx="1311.7" cy="693.5" r="5.0" fill="#0d0d0d"/>
<rect x="1230.2" y="611.9" width="66.5" height="66.20000000000005" fill="none" stroke="#0d0d0d" stroke-width="2.8"/>
<circle cx="1230.2" cy="611.9" r="6.6" fill="#0d0d0d"/>
<circle cx="1296.7" cy="611.9" r="6.6" fill="#0d0d0d"/>
<circle cx="1230.2" cy="678.1" r="6.6" fill="#0d0d0d"/>
<circle cx="1296.7" cy="678.1" r="6.6" fill="#0d0d0d"/>
<circle cx="1262.8" cy="645.8" r="4.3" fill="#fff" stroke="#0d0d0d" stroke-width="2.2"/>
<line x1="1214.8" y1="497.0" x2="1214.8" y2="590.0" stroke="#0d0d0d" stroke-width="1.55"/>
<line x1="1311.7" y1="484.0" x2="1311.7" y2="590.0" stroke="#0d0d0d" stroke-width="1.55"/>
<polygon points="1214.8,505.4 1236.3,500.2 1236.3,510.6" fill="#0d0d0d"/>
<polygon points="1311.7,505.4 1290.2,500.2 1290.2,510.6" fill="#0d0d0d"/>
<line x1="1196.6" y1="505.4" x2="1296.7" y2="505.4" stroke="#0d0d0d" stroke-width="1.55"/>
<text x="1153.4" y="516.5" font-size="26.5" text-anchor="middle" fill="#262626">1.457</text>
<line x1="1377.7" y1="484.0" x2="1377.7" y2="590.0" stroke="#0d0d0d" stroke-width="1.55"/>
<polygon points="1311.7,492.0 1333.2,486.8 1333.2,497.2" fill="#0d0d0d"/>
<polygon points="1377.7,492.0 1356.2,486.8 1356.2,497.2" fill="#0d0d0d"/>
<text x="1345.3" y="503.5" font-size="26.5" text-anchor="middle" fill="#262626">1</text>
<line x1="1230.2" y1="547.0" x2="1230.2" y2="606.0" stroke="#0d0d0d" stroke-width="1.55"/>
<line x1="1296.7" y1="547.0" x2="1296.7" y2="606.0" stroke="#0d0d0d" stroke-width="1.55"/>
<polygon points="1230.2,555.0 1251.7,549.8 1251.7,560.2" fill="#0d0d0d"/>
<polygon points="1296.7,555.0 1275.2,549.8 1275.2,560.2" fill="#0d0d0d"/>
<line x1="1245.2" y1="555.0" x2="1281.7" y2="555.0" stroke="#0d0d0d" stroke-width="1.55"/>
<rect x="1257" y="545" width="16" height="22" fill="url(#gGray)"/>
<text x="1265.0" y="567.0" font-size="26.5" text-anchor="middle" fill="#262626">1</text>
<rect x="1075.7" y="742.4" width="160" height="35.5" rx="5" fill="#ddeef7"/>
<text transform="translate(1155.2,768.6) scale(0.903,1)" font-size="22.8" text-anchor="middle" fill="#1c313c">#CloseFit_8_32</text>
<text x="1090.5" y="807.5" font-size="23" font-style="italic" font-weight="700" font-family="'Liberation Serif',serif" fill="#8f8f8f" opacity="0.7">fx</text>
<text x="1121.6" y="809" font-size="24.9" fill="#262626">Ø0.17</text>
<line x1="1230.2" y1="611.9" x2="1178.3" y2="741.5" stroke="#0d0d0d" stroke-width="1.4"/>
<line x1="1377.7" y1="596.9" x2="1668.5" y2="596.9" stroke="#0d0d0d" stroke-width="2.8" stroke-dasharray="34 8 5 8"/>
<line x1="1377.7" y1="1186.1" x2="1668.5" y2="1186.1" stroke="#0d0d0d" stroke-width="2.8" stroke-dasharray="34 8 5 8"/>
<line x1="1377.7" y1="596.9" x2="1377.7" y2="1186.1" stroke="#0d0d0d" stroke-width="2.8" stroke-dasharray="50 8 5 8"/>
<line x1="1668.5" y1="596.9" x2="1668.5" y2="1186.1" stroke="#0d0d0d" stroke-width="2.8" stroke-dasharray="50 8 5 8"/>
<circle cx="1377.7" cy="596.9" r="5.0" fill="#0d0d0d"/>
<circle cx="1668.5" cy="596.9" r="5.0" fill="#0d0d0d"/>
<circle cx="1377.7" cy="1186.1" r="5.0" fill="#0d0d0d"/>
<circle cx="1668.5" cy="1186.1" r="5.0" fill="#0d0d0d"/>
<line x1="1668.5" y1="553.5" x2="1668.5" y2="590.0" stroke="#0d0d0d" stroke-width="1.55"/>
<polygon points="1377.7,559.8 1399.2,554.6 1399.2,565.0" fill="#0d0d0d"/>
<polygon points="1668.5,559.8 1647.0,554.6 1647.0,565.0" fill="#0d0d0d"/>
<line x1="1392.7" y1="559.8" x2="1502.0" y2="559.8" stroke="#0d0d0d" stroke-width="1.55"/>
<line x1="1572.0" y1="559.8" x2="1653.5" y2="559.8" stroke="#0d0d0d" stroke-width="1.55"/>
<text x="1536.7" y="571.2" font-size="26.5" text-anchor="middle" fill="#262626">4.38</text>
<line x1="1680.0" y1="596.9" x2="1727.0" y2="596.9" stroke="#0d0d0d" stroke-width="1.55"/>
<line x1="1680.0" y1="1186.1" x2="1727.0" y2="1186.1" stroke="#0d0d0d" stroke-width="1.55"/>
<polygon points="1721.3,596.9 1716.1,618.4 1726.5,618.4" fill="#0d0d0d"/>
<polygon points="1721.3,1186.1 1716.1,1164.6 1726.5,1164.6" fill="#0d0d0d"/>
<line x1="1721.3" y1="611.9" x2="1721.3" y2="1033.0" stroke="#0d0d0d" stroke-width="1.55"/>
<line x1="1721.3" y1="1077.0" x2="1721.3" y2="1171.1" stroke="#0d0d0d" stroke-width="1.55"/>
<text x="1720.5" y="1066.0" font-size="26.5" text-anchor="middle" fill="#262626">8.88</text>
<circle cx="1523.3" cy="489.7" r="6.3" fill="none" stroke="#0d0d0d" stroke-width="1.9"/>
<circle cx="1523.3" cy="489.7" r="2.3" fill="#0d0d0d"/>
<circle cx="1523.6" cy="891.8" r="4.6" fill="#fff" stroke="#0d0d0d" stroke-width="2.2"/>
<polygon points="1615.9,1186.1 1610.7,1207.6 1621.1,1207.6" fill="#0d0d0d"/>
<polygon points="1615.9,1285.2 1610.7,1263.7 1621.1,1263.7" fill="#0d0d0d"/>
<line x1="1615.9" y1="1241.5" x2="1615.9" y2="1270.0" stroke="#0d0d0d" stroke-width="1.55"/>
<text x="1615.9" y="1232.9" font-size="26.5" text-anchor="middle" fill="#262626">1.5</text>
<line x1="1796.7" y1="468.6" x2="2178.5" y2="468.6" stroke="#0d0d0d" stroke-width="2.8" stroke-dasharray="34 8 5 8"/>
<line x1="1796.7" y1="842.4" x2="2178.5" y2="842.4" stroke="#0d0d0d" stroke-width="2.8" stroke-dasharray="34 8 5 8"/>
<line x1="1796.7" y1="468.6" x2="1796.7" y2="842.4" stroke="#0d0d0d" stroke-width="2.8" stroke-dasharray="50 8 5 8"/>
<line x1="2178.5" y1="468.6" x2="2178.5" y2="842.4" stroke="#0d0d0d" stroke-width="2.8" stroke-dasharray="50 8 5 8"/>
<circle cx="1796.7" cy="468.6" r="5.0" fill="#0d0d0d"/>
<circle cx="2178.5" cy="468.6" r="5.0" fill="#0d0d0d"/>
<circle cx="1796.7" cy="842.4" r="5.0" fill="#0d0d0d"/>
<circle cx="2178.5" cy="842.4" r="5.0" fill="#0d0d0d"/>
<polygon points="1875.8,468.6 1870.6,490.1 1881.0,490.1" fill="#0d0d0d"/>
<polygon points="1875.8,842.4 1870.6,820.9 1881.0,820.9" fill="#0d0d0d"/>
<line x1="1875.8" y1="483.6" x2="1875.8" y2="633.0" stroke="#0d0d0d" stroke-width="1.55"/>
<line x1="1875.8" y1="677.0" x2="1875.8" y2="827.4" stroke="#0d0d0d" stroke-width="1.55"/>
<text x="1874.2" y="666.2" font-size="26.5" text-anchor="middle" fill="#262626">5.637</text>
<polygon points="1956.7,422.6 1951.5,444.1 1961.9,444.1" fill="#0d0d0d"/>
<polygon points="1956.7,654.8 1951.5,633.3 1961.9,633.3" fill="#0d0d0d"/>
<line x1="1956.7" y1="440.0" x2="1956.7" y2="494.0" stroke="#0d0d0d" stroke-width="1.55"/>
<line x1="1956.7" y1="537.0" x2="1956.7" y2="640.0" stroke="#0d0d0d" stroke-width="1.55"/>
<text x="1956.7" y="527.1" font-size="26.5" text-anchor="middle" fill="#262626">3.5</text>
<line x1="1964.0" y1="655.2" x2="1977.0" y2="655.2" stroke="#0d0d0d" stroke-width="1.6"/>
<circle cx="1987.7" cy="655.4" r="4.6" fill="#fff" stroke="#0d0d0d" stroke-width="2.2"/>
<line x1="1987.7" y1="666.0" x2="1987.7" y2="687.0" stroke="#0d0d0d" stroke-width="1.55"/>
<polygon points="1987.7,679.0 2009.2,673.8 2009.2,684.2" fill="#0d0d0d"/>
<polygon points="2319.5,679.0 2298.0,673.8 2298.0,684.2" fill="#0d0d0d"/>
<line x1="2003.0" y1="679.0" x2="2229.0" y2="679.0" stroke="#0d0d0d" stroke-width="1.55"/>
<line x1="2261.0" y1="679.0" x2="2305.0" y2="679.0" stroke="#0d0d0d" stroke-width="1.55"/>
<text x="2244.5" y="690.1" font-size="26.5" text-anchor="middle" fill="#262626">5</text>
<line x1="1796.7" y1="852.0" x2="1796.7" y2="892.0" stroke="#0d0d0d" stroke-width="1.55"/>
<line x1="2178.5" y1="852.0" x2="2178.5" y2="892.0" stroke="#0d0d0d" stroke-width="1.55"/>
<polygon points="1796.7,885.7 1818.2,880.5 1818.2,890.9" fill="#0d0d0d"/>
<polygon points="2178.5,885.7 2157.0,880.5 2157.0,890.9" fill="#0d0d0d"/>
<line x1="1811.7" y1="885.7" x2="1938.0" y2="885.7" stroke="#0d0d0d" stroke-width="1.55"/>
<line x1="2021.0" y1="885.7" x2="2163.5" y2="885.7" stroke="#0d0d0d" stroke-width="1.55"/>
<text x="1978.3" y="897.4" font-size="26.5" text-anchor="middle" fill="#262626">5.754</text>
</g>
</g>
</svg>
<div id="hdr"></div><div id="tb"></div><div id="strip"></div>

<svg class="ico" style="left:20.9px;top:9px;" width="36.4" height="41" viewBox="140 115 465 525"><path d="M140 250L375 115 445 158 222 290V405L140 360z" fill="#5bbd47"/><path d="M430 232L497 193 605 255V500L513 555V285z" fill="#5bbd47"/><path d="M140 420L370 540 470 490V590L375 640 140 510z" fill="#5bbd47"/><path d="M262 330L365 265 395 287 300 347V388H262z" fill="#5c5c5c"/><path d="M412 318L466 345V465L430 482V347L412 338z" fill="#5c5c5c"/><path d="M268 415L370 470 405 452V492L370 512 268 457z" fill="#5c5c5c"/></svg>
<div class="t" style="left:71px;top:11.2px;font-size:32px;color:#606060;font-weight:400;font-style:normal;letter-spacing:1.5px;-webkit-text-stroke:0.35px #e9e9e9">onshape</div>
<div class="abs" style="left:221px;top:21px;width:24px;height:4.500px;background:#2d2d2d"></div>
<div class="abs" style="left:221px;top:30px;width:24px;height:4.500px;background:#2d2d2d"></div>
<div class="abs" style="left:221px;top:39px;width:24px;height:4.500px;background:#2d2d2d"></div>
<div class="t" style="left:262px;top:14.8px;font-size:33.2px;color:#2b2b2b;font-weight:700;font-style:normal;transform:scaleX(0.972);transform-origin:0 50%">1E - Full Detail Drivebase</div>
<div class="t" style="left:660px;top:22.5px;font-size:23px;color:#9b9b9b;font-weight:400;font-style:normal;">FRCDesignLib Update</div>
<svg class="ico" style="left:909px;top:20px;" width="26" height="26" viewBox="0 0 26 26"><g fill="none" stroke="#2d2d2d" stroke-width="2.600" stroke-linecap="round"><path d="M11.500 15.500a4.300 4.300 0 0 1 0-6l3.500-3.500a4.300 4.300 0 0 1 6 6l-2 2"/><path d="M14.500 10.500a4.300 4.300 0 0 1 0 6L11 20a4.300 4.300 0 0 1-6-6l2-2"/></g></svg>
<svg class="ico" style="left:946px;top:20px;" width="30" height="25" viewBox="0 0 30 25"><path d="M1.500 3.500c0-1 .7-1.700 1.700-1.700h7.300l2.500 3h13.300c1 0 1.700.7 1.700 1.700v15c0 1-.7 1.700-1.700 1.700H3.200c-1 0-1.700-.7-1.700-1.700z" fill="#f4f4f4" stroke="#a9a9a9" stroke-width="1.500"/></svg>
<div class="t" style="left:982px;top:21px;font-size:23px;color:#8a8a8a;font-weight:400;font-style:normal;">Stage 1</div>
<svg class="ico" style="left:1136px;top:18px;" width="28" height="28" viewBox="0 0 28 28"><path d="M14 2.500L27 9 14 15.500 1 9z" fill="#1d5bbf"/><path d="M6.500 13.500V20c3 3 12 3 15 0v-6.500L14 17.500z" fill="#1d5bbf"/><path d="M3.500 10.500V20l-1.500 5h3l-1-5" fill="none" stroke="#1d5bbf" stroke-width="1.300"/></svg>
<svg class="ico" style="left:1176px;top:17px;" width="28" height="28" viewBox="0 0 28 28"><circle cx="14" cy="14" r="12.300" fill="#fff" stroke="#2d2d2d" stroke-width="2.200"/><path d="M9 4c2 0 3 1 5 1s2 2 0 3-1 3-3 3-1 3-3 2-4-2-4-4 3-5 5-5zM13 13c2-1 5 0 6 2s0 4-2 6-2 4-3 3-1-3-2-5-1-5 1-6zM20 5c2 1 4 3 4.500 6-2 0-3-1-4-3s-1.500-2-.500-3z" fill="#2d2d2d"/></svg>
<svg class="ico" style="left:1218px;top:17px;" width="28" height="28" viewBox="0 0 28 28"><path d="M8.500 6H3v19h8M8.500 3h9v5" fill="none" stroke="#2d2d2d" stroke-width="2.200"/><path d="M12 10.500h8.500l5 5V26.500H12z" fill="#e9e9e9" stroke="#2d2d2d" stroke-width="2.200" stroke-linejoin="round"/><path d="M20 10.500v5.500h5.500" fill="none" stroke="#2d2d2d" stroke-width="1.600"/></svg>
<div class="t" style="left:1255px;top:21px;font-size:21.5px;color:#2b2b2b;font-weight:400;font-style:normal;">164</div>
<svg class="ico" style="left:1319px;top:15px;" width="14" height="30" viewBox="0 0 14 30"><circle cx="7" cy="14.500" r="4.200" fill="#2d2d2d"/><rect x="5.700" y="1" width="2.600" height="2.800" fill="#2d2d2d"/><rect x="5.700" y="5.500" width="2.600" height="2.800" fill="#2d2d2d"/><rect x="5.700" y="20.800" width="2.600" height="2.800" fill="#2d2d2d"/><rect x="5.700" y="25.300" width="2.600" height="2.800" fill="#2d2d2d"/></svg>
<div class="t" style="left:1349px;top:21px;font-size:21.5px;color:#2b2b2b;font-weight:400;font-style:normal;">404</div>
<svg class="ico" style="left:1407px;top:15px;" width="30" height="30" viewBox="0 0 30 30"><path d="M2 14h6v13H2z" fill="#1d5bbf"/><path d="M9.500 14.500c3-2.500 5-6 5.500-10.500.200-2 4.500-1.500 4.500 2.500 0 2-.500 4-1.500 6h7c2.500 0 3.500 2.500 2 4 1 1.500.500 3-.800 3.800.700 1.500 0 2.800-1.200 3.400.300 1.800-1 3.300-3 3.300h-8c-2 0-3-1-4.500-1.500z" fill="#1d5bbf"/></svg>
<div class="t" style="left:1445px;top:21px;font-size:21.5px;color:#2b2b2b;font-weight:400;font-style:normal;">2</div>
<svg class="ico" style="left:2024px;top:16px;" width="34" height="34" viewBox="0 0 34 34"><path d="M10 4C6.500 4 6 5.500 6 8v5c0 2-1 3.500-3 4 2 .500 3 2 3 4v5c0 2.500.500 4 4 4M24 4c3.500 0 4 1.500 4 4v5c0 2 1 3.500 3 4-2 .500-3 2-3 4v5c0 2.500-.500 4-4 4" fill="none" stroke="#2d2d2d" stroke-width="2.800"/><path d="M11 17l4.500 4.500L23.500 13" fill="none" stroke="#2d2d2d" stroke-width="3.200"/></svg>
<svg class="ico" style="left:2076px;top:17px;" width="28" height="30" viewBox="0 0 28 30"><path d="M14 1.500c1.300 0 2 .800 2 2 4 1 6 4.500 6 9v6l3.500 5.500v1.500h-23V24L6 18.500v-6c0-4.500 2-8 6-9 0-1.200.700-2 2-2z" fill="#2d2d2d"/><path d="M10.500 27h7c0 2-1.500 3-3.500 3s-3.500-1-3.500-3z" fill="#2d2d2d"/></svg>
<svg class="ico" style="left:2125px;top:19px;" width="26" height="28" viewBox="0 0 26 28"><rect x="1.500" y="1.500" width="22" height="24.500" rx="2.500" fill="none" stroke="#2d2d2d" stroke-width="2.300"/><path d="M12.500 7.500h8M12.500 13.500h8M12.500 19.500h8" stroke="#2d2d2d" stroke-width="2.600"/><path d="M4.500 7.500l2 2 3.500-4M4.500 13.500l2 2 3.500-4M4.500 19.500l2 2 3.500-4" fill="none" stroke="#2d2d2d" stroke-width="1.600"/></svg>
<svg class="ico" style="left:2171px;top:18px;" width="30" height="30" viewBox="0 0 30 30"><rect x="2.500" y="2.500" width="9.500" height="9.500" fill="none" stroke="#2d2d2d" stroke-width="2.400"/><rect x="2.500" y="18" width="9.500" height="9.500" fill="none" stroke="#2d2d2d" stroke-width="2.400"/><rect x="17.500" y="18" width="9.500" height="9.500" fill="none" stroke="#2d2d2d" stroke-width="2.400"/><path d="M22.500 1v13M16 7.500h13" stroke="#2d2d2d" stroke-width="2.800"/></svg>
<svg class="ico" style="left:2220px;top:19px;" width="28" height="28" viewBox="0 0 28 28"><path d="M13 1C6 1 2 6 2 12c0 4 2 6.500 4 8.500V27h11v-4h4c1.500 0 2.500-1 2.500-2.500V17l2.500-1-2.500-5C23 5 19 1 13 1z" fill="#2d2d2d"/><circle cx="11" cy="12" r="3.600" fill="none" stroke="#e9e9e9" stroke-width="2.200" stroke-dasharray="2 1.300"/><circle cx="17.500" cy="7.500" r="2.300" fill="none" stroke="#e9e9e9" stroke-width="1.700" stroke-dasharray="1.400 1"/></svg>
<div class="abs" style="left:2264px;top:4px;width:88px;height:49px;background:#1552b5;border-radius:8px"></div>
<div class="t" style="left:2281px;top:18px;font-size:21.2px;color:#fff;font-weight:400;font-style:normal;-webkit-text-stroke:0.6px #fff">Share</div>
<svg class="ico" style="left:2368px;top:19px;" width="28" height="28" viewBox="0 0 28 28"><circle cx="14" cy="14" r="13" fill="#2d2d2d"/><path d="M9.500 10.500c0-3 2-4.500 4.500-4.500s4.500 1.500 4.500 4c0 3-3.800 3.300-3.800 6.300" fill="none" stroke="#e9e9e9" stroke-width="3.200"/><rect x="12.800" y="18.800" width="3.400" height="3.400" fill="#e9e9e9"/></svg>
<div class="abs" style="left:2407px;top:29.500px;width:0;height:0;border-left:6px solid transparent;border-right:6px solid transparent;border-top:6.500px solid #2d2d2d"></div>
<svg class="ico" style="left:2437px;top:15px;" width="37" height="36" viewBox="0 0 37 36"><rect width="37" height="36" rx="3" fill="#b9a89a"/><path d="M0 0h37v9L22 5 0 12z" fill="#d4cdc6"/><path d="M26 0h11v36H30z" fill="#aab0b6"/><path d="M2 16l22-6 8 6v8L10 32l-8-6z" fill="#7a6250"/><path d="M3 15l21-6 7 5-21 7z" fill="#9a8068"/><ellipse cx="14" cy="18" rx="3.500" ry="2" fill="#2f8fd6"/><ellipse cx="23.500" cy="15.500" rx="3.500" ry="2" fill="#2f8fd6"/><circle cx="8" cy="26" r="1.300" fill="#3a2f28"/><circle cx="19" cy="24" r="1.300" fill="#3a2f28"/></svg>
<div class="t" style="left:2482px;top:20.5px;font-size:21.2px;color:#2b2b2b;font-weight:400;font-style:normal;">Kelly</div>
<div class="abs" style="left:2538px;top:26px;width:0;height:0;border-left:6px solid transparent;border-right:6px solid transparent;border-top:6.500px solid #2d2d2d"></div>
<svg class="ico" style="left:68.0px;top:69.0px;" width="36" height="36" viewBox="0 0 36 36"><path d="M7.2 15.5L17.2 5.9V11C24 11 28.5 16 27.5 22.5 27.2 24.5 26.5 26.5 25.5 27.8 25.5 22 22.5 18.8 17.2 18.6V23.7Z" fill="#2a2a2a"/></svg>
<svg class="ico" style="left:119.0px;top:69.0px;" width="36" height="36" viewBox="0 0 36 36"><path d="M7.2 15.5L17.2 5.9V11C24 11 28.5 16 27.5 22.5 27.2 24.5 26.5 26.5 25.5 27.8 25.5 22 22.5 18.8 17.2 18.6V23.7Z" fill="#9d9d9d" transform="translate(36,0) scale(-1,1)"/></svg>
<div class="abs" style="left:164.5px;top:68px;width:3px;height:38px;background:#d2d2d2"></div>
<svg class="ico" style="left:177.0px;top:69.0px;" width="36" height="36" viewBox="0 0 36 36"><path d="M6.5 4.5h18.5l5.5 5V31H10.5l-6-5.5V6.5z" fill="#fff" stroke="#3a3a3a" stroke-width="1.6" stroke-linejoin="round"/><path d="M4.8 6l5.700 5h20M10.500 11v20" fill="none" stroke="#666" stroke-width="1.1"/><path d="M13.3 15.300l4.200-2.800h13v3" fill="#8a8a8a" stroke="#4a4a4a" stroke-width="1"/><rect x="17" y="15.500" width="13.500" height="15" fill="#9e9e9e" stroke="#4a4a4a" stroke-width="1.200"/><path d="M13.300 15.300v12l3.700 3.200V15.500z" fill="#787878" stroke="#4a4a4a" stroke-width="1"/></svg>
<svg class="ico" style="left:228.0px;top:69.0px;" width="36" height="36" viewBox="0 0 36 36"><path d="M27.6 9.1A13 13 0 1 0 27.6 26.9L21.5 21.2A4.6 4.6 0 1 1 21.5 14.8Z" fill="#8f8f8f" stroke="#333" stroke-width="1.7" stroke-linejoin="round"/><ellipse cx="25.2" cy="12.2" rx="4.6" ry="2.5" transform="rotate(-43 25.2 12.2)" fill="#fff" stroke="#333" stroke-width="1.3"/><ellipse cx="25.2" cy="23.8" rx="4.6" ry="2.5" transform="rotate(43 25.2 23.8)" fill="#fff" stroke="#333" stroke-width="1.3"/><path d="M6 18h26" stroke="#222" stroke-width="1.2" stroke-dasharray="6 2 2 2"/></svg>
<div class="abs" style="left:273.0px;top:68px;width:3px;height:38px;background:#d2d2d2"></div>
<svg class="ico" style="left:284.0px;top:69.0px;" width="36" height="36" viewBox="0 0 36 36"><path d="M8 28L28 8" stroke="#2a2a2a" stroke-width="2.2"/><circle cx="7" cy="29" r="3.0" fill="#fff" stroke="#4a68c4" stroke-width="0.95"/><circle cx="29" cy="7" r="3.0" fill="#fff" stroke="#4a68c4" stroke-width="0.95"/></svg>
<svg class="ico" style="left:330px;top:79px;" width="20" height="16" viewBox="0 0 20 16"><path d="M2.5 4l7.5 7.5L17.5 4" fill="none" stroke="#2a2a2a" stroke-width="3" stroke-linejoin="miter"/></svg>
<svg class="ico" style="left:362.0px;top:69.0px;" width="36" height="36" viewBox="0 0 36 36"><rect x="7.500" y="8" width="21.500" height="21" fill="none" stroke="#2a2a2a" stroke-width="2"/><circle cx="7.5" cy="29" r="2.9000000000000004" fill="#fff" stroke="#4a68c4" stroke-width="0.95"/><circle cx="29" cy="8" r="2.9000000000000004" fill="#fff" stroke="#4a68c4" stroke-width="0.95"/></svg>
<svg class="ico" style="left:408px;top:79px;" width="20" height="16" viewBox="0 0 20 16"><path d="M2.5 4l7.5 7.5L17.5 4" fill="none" stroke="#2a2a2a" stroke-width="3" stroke-linejoin="miter"/></svg>
<svg class="ico" style="left:440.0px;top:69.0px;" width="36" height="36" viewBox="0 0 36 36"><circle cx="18" cy="18" r="12.800" fill="none" stroke="#2a2a2a" stroke-width="2"/><circle cx="18" cy="18" r="2.6" fill="#fff" stroke="#4a68c4" stroke-width="0.95"/><circle cx="27.5" cy="9.5" r="2.9000000000000004" fill="#fff" stroke="#4a68c4" stroke-width="0.95"/></svg>
<svg class="ico" style="left:486px;top:79px;" width="20" height="16" viewBox="0 0 20 16"><path d="M2.5 4l7.5 7.5L17.5 4" fill="none" stroke="#2a2a2a" stroke-width="3" stroke-linejoin="miter"/></svg>
<svg class="ico" style="left:518.0px;top:69.0px;" width="36" height="36" viewBox="0 0 36 36"><path d="M8 24a10.500 10.500 0 0 1 21 0" fill="none" stroke="#2a2a2a" stroke-width="2"/><path d="M15.500 22h5M18 19.500v5" stroke="#2a2a2a" stroke-width="1.500"/><circle cx="7.5" cy="24.5" r="2.9000000000000004" fill="#fff" stroke="#4a68c4" stroke-width="0.95"/><circle cx="28.5" cy="24.5" r="2.9000000000000004" fill="#fff" stroke="#4a68c4" stroke-width="0.95"/><circle cx="18" cy="11.5" r="2.9000000000000004" fill="#fff" stroke="#4a68c4" stroke-width="0.95"/></svg>
<svg class="ico" style="left:564px;top:79px;" width="20" height="16" viewBox="0 0 20 16"><path d="M2.5 4l7.5 7.5L17.5 4" fill="none" stroke="#2a2a2a" stroke-width="3" stroke-linejoin="miter"/></svg>
<svg class="ico" style="left:596.0px;top:69.0px;" width="36" height="36" viewBox="0 0 36 36"><path d="M18.3 5.8l12.6 9-4.600 14.800H10.100L5.600 14.800z" fill="none" stroke="#2a2a2a" stroke-width="2.300" stroke-linejoin="round"/><circle cx="18.300" cy="18.800" r="9.800" fill="none" stroke="#4a68c4" stroke-width="1"/><circle cx="18.3" cy="19" r="2.3000000000000003" fill="#fff" stroke="#4a68c4" stroke-width="0.95"/><circle cx="25.3" cy="10.5" r="2.8000000000000003" fill="#fff" stroke="#4a68c4" stroke-width="0.95"/></svg>
<svg class="ico" style="left:642px;top:79px;" width="20" height="16" viewBox="0 0 20 16"><path d="M2.5 4l7.5 7.5L17.5 4" fill="none" stroke="#2a2a2a" stroke-width="3" stroke-linejoin="miter"/></svg>
<svg class="ico" style="left:675.0px;top:69.0px;" width="36" height="36" viewBox="0 0 36 36"><path d="M7 29c1-9 6-8.500 10.500-10.500S27 14 29 7" fill="none" stroke="#2a2a2a" stroke-width="2"/><circle cx="6.5" cy="29.5" r="2.9000000000000004" fill="#fff" stroke="#4a68c4" stroke-width="0.95"/><circle cx="17.5" cy="18.5" r="2.9000000000000004" fill="#fff" stroke="#4a68c4" stroke-width="0.95"/><circle cx="29" cy="7" r="2.9000000000000004" fill="#fff" stroke="#4a68c4" stroke-width="0.95"/></svg>
<svg class="ico" style="left:721px;top:79px;" width="20" height="16" viewBox="0 0 20 16"><path d="M2.5 4l7.5 7.5L17.5 4" fill="none" stroke="#2a2a2a" stroke-width="3" stroke-linejoin="miter"/></svg>
<svg class="ico" style="left:752.0px;top:69.0px;" width="36" height="36" viewBox="0 0 36 36"><circle cx="18" cy="18" r="4.500" fill="#fff" stroke="#1d5bbf" stroke-width="1.800"/></svg>
<svg class="ico" style="left:803.0px;top:69.0px;" width="36" height="36" viewBox="0 0 36 36"><rect x="6" y="6" width="25" height="24" fill="none" stroke="#777" stroke-width="1.200" stroke-dasharray="2.500 2"/><path d="M10 29L17.300 8h3L27.600 29h-4l-1.600-5h-6.400l-1.600 5zM16.600 20.500h4.400l-2.200-7z" fill="#fff" stroke="#2a2a2a" stroke-width="1.700" stroke-linejoin="round"/><circle cx="6" cy="30" r="2.8000000000000003" fill="#fff" stroke="#4a68c4" stroke-width="0.95"/><circle cx="31" cy="6" r="2.8000000000000003" fill="#fff" stroke="#4a68c4" stroke-width="0.95"/></svg>
<svg class="ico" style="left:854.0px;top:69.0px;" width="36" height="36" viewBox="0 0 36 36"><path d="M7.9 7H25l5.200 5.500v16.700H13l-5.100-5.200z" fill="#fff" stroke="#2a2a2a" stroke-width="1.900" stroke-linejoin="round"/><path d="M7.900 7l5.100 5.500h17.200" fill="none" stroke="#2a2a2a" stroke-width="1.900"/><path d="M13.200 12.500v16.700" stroke="#1d5bbf" stroke-width="3.600"/></svg>
<svg class="ico" style="left:900px;top:79px;" width="20" height="16" viewBox="0 0 20 16"><path d="M2.5 4l7.5 7.5L17.5 4" fill="none" stroke="#2a2a2a" stroke-width="3" stroke-linejoin="miter"/></svg>
<svg class="ico" style="left:933.0px;top:69.0px;" width="36" height="36" viewBox="0 0 36 36"><path d="M6.500 6v24" stroke="#1d5bbf" stroke-width="3.400"/><path d="M28.500 6v24" stroke="#2a2a2a" stroke-width="3.400" stroke-dasharray="5.500 2.800"/><path d="M23 12.500H13.500M16.500 9.500l-3.500 3 3.500 3" fill="none" stroke="#2a2a2a" stroke-width="1.700"/><path d="M12 24h9.500M18.500 21l3.500 3-3.500 3" fill="none" stroke="#1d5bbf" stroke-width="1.700"/></svg>
<div class="abs" style="left:977.0px;top:68px;width:3px;height:38px;background:#d2d2d2"></div>
<svg class="ico" style="left:990.0px;top:71.0px;" width="36" height="36" viewBox="0 0 36 36"><path d="M6 8.500V6h2.500M11 6h2" fill="none" stroke="#999" stroke-width="1" stroke-dasharray="2 1.500"/><path d="M6.500 24C6.500 14 13 7 24 6.500" fill="none" stroke="#2a2a2a" stroke-width="3"/><path d="M6.500 24v7M24 6.500h6" stroke="#1d5bbf" stroke-width="1.600"/></svg>
<svg class="ico" style="left:1035px;top:79px;" width="20" height="16" viewBox="0 0 20 16"><path d="M2.5 4l7.5 7.5L17.5 4" fill="none" stroke="#2a2a2a" stroke-width="3" stroke-linejoin="miter"/></svg>
<svg class="ico" style="left:1067.0px;top:69.0px;" width="36" height="36" viewBox="0 0 36 36"><path d="M28.500 8.500L13 21M28.500 27.500L13 15" stroke="#2a2a2a" stroke-width="4.200" stroke-linecap="round"/><circle cx="11" cy="11.500" r="3.800" fill="#fff" stroke="#2a2a2a" stroke-width="2.600"/><circle cx="11" cy="24.500" r="3.800" fill="#fff" stroke="#2a2a2a" stroke-width="2.600"/><circle cx="18.500" cy="18" r="1.200" fill="#fff"/></svg>
<svg class="ico" style="left:1113px;top:79px;" width="20" height="16" viewBox="0 0 20 16"><path d="M2.5 4l7.5 7.5L17.5 4" fill="none" stroke="#2a2a2a" stroke-width="3" stroke-linejoin="miter"/></svg>
<svg class="ico" style="left:1145.0px;top:69.0px;" width="36" height="36" viewBox="0 0 36 36"><path d="M6.500 30V15.500a8.500 8.500 0 0 1 17 0c0 2-1 3.500-2.500 5h7.500v9.500H18" fill="none" stroke="#2a2a2a" stroke-width="2.200"/><path d="M10.500 30V15.500a4.500 4.500 0 0 1 9 0c0 2.500-2 4-2 6.500v3h8" fill="none" stroke="#1d5bbf" stroke-width="1.500"/></svg>
<svg class="ico" style="left:1191px;top:79px;" width="20" height="16" viewBox="0 0 20 16"><path d="M2.5 4l7.5 7.5L17.5 4" fill="none" stroke="#2a2a2a" stroke-width="3" stroke-linejoin="miter"/></svg>
<svg class="ico" style="left:1224.0px;top:69.0px;" width="36" height="36" viewBox="0 0 36 36"><path d="M5.500 6h5v19.500h5.500V30H5.500z" fill="none" stroke="#2a2a2a" stroke-width="2.400"/><path d="M18.500 6v24" stroke="#2a2a2a" stroke-width="1.500" stroke-dasharray="5 2 1.500 2"/><path d="M31 6h-4.500v19.500H21.500V30H31z" fill="none" stroke="#1d5bbf" stroke-width="1.500"/></svg>
<svg class="ico" style="left:1275.0px;top:69.0px;" width="36" height="36" viewBox="0 0 36 36"><rect x="7.500" y="7.500" width="8.500" height="8.500" fill="none" stroke="#2a2a2a" stroke-width="2.300"/><rect x="21" y="7.500" width="8.500" height="8.500" fill="none" stroke="#1d5bbf" stroke-width="1.400"/><rect x="7.500" y="21" width="8.500" height="8.500" fill="none" stroke="#1d5bbf" stroke-width="1.400"/><rect x="21" y="21" width="8.500" height="8.500" fill="none" stroke="#1d5bbf" stroke-width="1.400"/></svg>
<svg class="ico" style="left:1321px;top:79px;" width="20" height="16" viewBox="0 0 20 16"><path d="M2.5 4l7.5 7.5L17.5 4" fill="none" stroke="#2a2a2a" stroke-width="3" stroke-linejoin="miter"/></svg>
<svg class="ico" style="left:1352.0px;top:69.0px;" width="36" height="36" viewBox="0 0 36 36"><path d="M7 9.500V31h22V12l-5.500-5.500H19" fill="#fff" stroke="#2a2a2a" stroke-width="1.700" stroke-linejoin="round"/><path d="M23.500 6.500V12H29" fill="none" stroke="#2a2a2a" stroke-width="1.400"/><path d="M8 5.500c5-.5 8 1.500 8.500 6" fill="none" stroke="#2a2a2a" stroke-width="1.700"/><path d="M12 11.500h9l-4.500 5z" fill="#2a2a2a"/><text x="18" y="28.500" font-size="9.300" font-weight="700" text-anchor="middle" font-family="'Liberation Sans',sans-serif" fill="#2a2a2a" letter-spacing="0">DXF</text></svg>
<svg class="ico" style="left:1398px;top:79px;" width="20" height="16" viewBox="0 0 20 16"><path d="M2.5 4l7.5 7.5L17.5 4" fill="none" stroke="#2a2a2a" stroke-width="3" stroke-linejoin="miter"/></svg>
<div class="abs" style="left:1425.0px;top:68px;width:3px;height:38px;background:#d2d2d2"></div>
<svg class="ico" style="left:1436.0px;top:69.0px;" width="36" height="36" viewBox="0 0 36 36"><path d="M11 24L25 10.500" stroke="#2a2a2a" stroke-width="2.200"/><path d="M8.500 26.500l3.200-8.200 5 5zM27.500 8l-3.200 8.200-5-5z" fill="#2a2a2a"/><path d="M5 23l7.500 7.500M23.500 4.500L31 12" stroke="#2a2a2a" stroke-width="1.300"/></svg>
<div class="abs" style="left:1481.5px;top:68px;width:3px;height:38px;background:#d2d2d2"></div>
<svg class="ico" style="left:1493.0px;top:69.0px;" width="36" height="36" viewBox="0 0 36 36"><path d="M5 28L28 5" stroke="#1d5bbf" stroke-width="1.500"/><path d="M16 17l14 13" stroke="#2a2a2a" stroke-width="3.400"/><circle cx="16" cy="17" r="3.300" fill="#2a2a2a"/></svg>
<svg class="ico" style="left:1545.0px;top:69.0px;" width="36" height="36" viewBox="0 0 36 36"><circle cx="18" cy="18" r="12" fill="none" stroke="#1d5bbf" stroke-width="1.500"/><circle cx="18" cy="18" r="6.800" fill="none" stroke="#2a2a2a" stroke-width="3.200"/></svg>
<svg class="ico" style="left:1595.0px;top:69.0px;" width="36" height="36" viewBox="0 0 36 36"><path d="M6.500 12L25 30" stroke="#2a2a2a" stroke-width="3.400"/><path d="M12.500 7L30 24" stroke="#1d5bbf" stroke-width="1.500"/></svg>
<svg class="ico" style="left:1646.0px;top:69.0px;" width="36" height="36" viewBox="0 0 36 36"><path d="M5 29L28.500 6.500" stroke="#2a2a2a" stroke-width="3.400"/><circle cx="24" cy="22.500" r="7.300" fill="none" stroke="#1d5bbf" stroke-width="1.500"/></svg>
<svg class="ico" style="left:1698.0px;top:69.0px;" width="36" height="36" viewBox="0 0 36 36"><path d="M5.500 18h25" stroke="#2a2a2a" stroke-width="3.400"/></svg>
<svg class="ico" style="left:1748.0px;top:69.0px;" width="36" height="36" viewBox="0 0 36 36"><path d="M18 6v24" stroke="#2a2a2a" stroke-width="3.400"/></svg>
<svg class="ico" style="left:1799.0px;top:69.0px;" width="36" height="36" viewBox="0 0 36 36"><path d="M4.500 29.500h27" stroke="#2a2a2a" stroke-width="3.400"/><path d="M17 5.500v23" stroke="#1d5bbf" stroke-width="1.600"/><path d="M17 19.500h8v9" fill="none" stroke="#2a2a2a" stroke-width="1.600"/></svg>
<svg class="ico" style="left:1850.0px;top:69.0px;" width="36" height="36" viewBox="0 0 36 36"><path d="M10 14.500h16M10 22h16" stroke="#2a2a2a" stroke-width="3.400"/></svg>
<svg class="ico" style="left:1901.0px;top:69.0px;" width="36" height="36" viewBox="0 0 36 36"><path d="M4.500 18h27" stroke="#1d5bbf" stroke-width="1.600" stroke-dasharray="7 5.500 2 0 2 5.500 7"/><circle cx="18" cy="18" r="3.500" fill="#2a2a2a"/></svg>
<svg class="ico" style="left:1952.0px;top:69.0px;" width="36" height="36" viewBox="0 0 36 36"><path d="M6 11c6 1.500 12 7 13 19" fill="none" stroke="#1d5bbf" stroke-width="1.600"/><path d="M15.500 17L29 6" stroke="#2a2a2a" stroke-width="3.400"/></svg>
<svg class="ico" style="left:2003.0px;top:69.0px;" width="36" height="36" viewBox="0 0 36 36"><path d="M7 5c1 14 9 23 24 24" fill="none" stroke="#1d5bbf" stroke-width="1.500"/><path d="M15 24.500c7-2 6-15 14.500-18.500" fill="none" stroke="#2a2a2a" stroke-width="3.400"/><circle cx="15" cy="24.500" r="3.300" fill="#2a2a2a"/></svg>
<svg class="ico" style="left:2054.0px;top:69.0px;" width="36" height="36" viewBox="0 0 36 36"><path d="M15 7H5l8 11-8 11h10" fill="none" stroke="#2a2a2a" stroke-width="2.600" stroke-linejoin="miter"/><path d="M21 7h10l-8 11 8 11H21" fill="none" stroke="#1d5bbf" stroke-width="1.500"/><path d="M18 5v26" stroke="#2a2a2a" stroke-width="1.500" stroke-dasharray="6 2.500 2 2.500"/></svg>
<svg class="ico" style="left:2105.0px;top:69.0px;" width="36" height="36" viewBox="0 0 36 36"><path d="M6 15.500h24" stroke="#1d5bbf" stroke-width="3.400"/><path d="M10 17.500l-3.500 5M15 17.500l-3.500 5M20 17.500l-3.500 5M25 17.500l-3.500 5M30 17.500l-3.500 5" stroke="#2a2a2a" stroke-width="1.300"/></svg>
<svg class="ico" style="left:2156.0px;top:69.0px;" width="36" height="36" viewBox="0 0 36 36"><path d="M30.0 27.0L35.5 27.0" stroke="#777" stroke-width="1.300"/><path d="M29.6 23.4L34.9 21.8" stroke="#777" stroke-width="1.300"/><path d="M28.4 20.0L33.2 17.0" stroke="#777" stroke-width="1.300"/><path d="M26.5 17.1L30.4 12.9" stroke="#777" stroke-width="1.300"/><path d="M24.0 14.9L26.8 9.7" stroke="#777" stroke-width="1.300"/><path d="M21.1 13.5L22.5 7.7" stroke="#777" stroke-width="1.300"/><path d="M18.0 13.0L18.0 7.0" stroke="#777" stroke-width="1.300"/><path d="M14.9 13.5L13.5 7.7" stroke="#777" stroke-width="1.300"/><path d="M12.0 14.9L9.3 9.7" stroke="#777" stroke-width="1.300"/><path d="M9.5 17.1L5.6 12.9" stroke="#777" stroke-width="1.300"/><path d="M7.6 20.0L2.8 17.0" stroke="#777" stroke-width="1.300"/><path d="M6.4 23.4L1.1 21.8" stroke="#777" stroke-width="1.300"/><path d="M6.0 27.0L0.5 27.0" stroke="#777" stroke-width="1.300"/><path d="M5.500 29c2-9 6-15 12.500-15s10.500 6 12.500 15" fill="none" stroke="#1d5bbf" stroke-width="3.200"/></svg>
<div class="abs" style="left:2217px;top:65px;width:241px;height:45px;background:#efefef;border-radius:7px"></div>
<div class="t" style="left:2232px;top:77.5px;font-size:20.3px;color:#222;font-weight:400;font-style:normal;">Search tools...</div>
<div class="abs" style="left:2369px;top:75px;width:49px;height:26px;border:1px solid #aaa;border-radius:3px 0 0 3px;background:#f4f4f4"></div>
<div class="abs" style="left:2417px;top:75px;width:26px;height:26px;border:1px solid #aaa;border-radius:0 3px 3px 0;background:#f4f4f4"></div>
<div class="t" style="left:2373px;top:79.5px;font-size:17.5px;color:#333;font-weight:400;font-style:normal;font-family:'Liberation Sans','DejaVu Sans',sans-serif">alt/⌥</div>
<div class="t" style="left:2425.5px;top:79px;font-size:17.5px;color:#333;font-weight:400;font-style:normal;">c</div>
<svg class="ico" style="left:14px;top:72px;" width="34" height="30" viewBox="0 0 34 30"><circle cx="6.500" cy="6.500" r="4" fill="none" stroke="#2d2d2d" stroke-width="2.400"/><circle cx="6.500" cy="24.500" r="2.800" fill="#2d2d2d"/><circle cx="17" cy="15.500" r="2.500" fill="#2d2d2d"/><path d="M6.500 10.500V24M6.500 20c0-3 4-4 10-4.500" fill="none" stroke="#2d2d2d" stroke-width="2.400"/><path d="M15 5.500h16M22 15.500h9M15 25.500h16" stroke="#2d2d2d" stroke-width="3"/></svg>
<svg class="ico" style="left:14px;top:124px;" width="34" height="34" viewBox="0 0 34 34"><circle cx="10" cy="15.500" r="4.500" fill="#2d2d2d"/><rect x="8.700" y="1" width="2.600" height="3" fill="#2d2d2d"/><rect x="8.700" y="6" width="2.600" height="3" fill="#2d2d2d"/><rect x="8.700" y="22" width="2.600" height="3" fill="#2d2d2d"/><rect x="8.700" y="27" width="2.600" height="3" fill="#2d2d2d"/><path d="M24 17v12M18 23h12" stroke="#1d5bbf" stroke-width="3"/></svg>
<svg class="ico" style="left:14px;top:176px;" width="34" height="30" viewBox="0 0 34 30"><ellipse cx="16" cy="11.500" rx="14.500" ry="9.500" fill="#2d2d2d"/><path d="M8 17l-5 9 11-6z" fill="#2d2d2d"/></svg>
<svg class="ico" style="left:15px;top:230px;" width="32" height="32" viewBox="0 0 32 32"><path d="M23 18v9.500c0 1-.700 1.700-1.700 1.700H5c-1 0-1.700-.700-1.700-1.700V5.500c0-1 .700-1.700 1.700-1.700h16.300c1 0 1.700.700 1.700 1.700V8" fill="none" stroke="#2d2d2d" stroke-width="2.600"/><path d="M8 10.500h11M8 16h8M8 21.500h5" stroke="#2d2d2d" stroke-width="2.400"/><path d="M14.500 24.500l2-5.500L26 9l3.500 3.500-9.700 9.800z" fill="#2d2d2d"/></svg>
<svg class="ico" style="left:14px;top:281px;" width="34" height="34" viewBox="0 0 34 34"><circle cx="19" cy="19" r="10.500" fill="none" stroke="#2d2d2d" stroke-width="3"/><path d="M14.500 3h9M19 3.500V8M27 9.500l2.200-2.200M19 19l4.500-4.500" fill="none" stroke="#2d2d2d" stroke-width="2.600"/><circle cx="19" cy="19" r="2" fill="#2d2d2d"/><path d="M3 14h6M1.500 19h6M3 24h6" stroke="#2d2d2d" stroke-width="2.200"/></svg>
<div class="abs" style="left:0;top:324px;width:59px;height:1px;background:#cfcfcf"></div>
<svg class="ico" style="left:17px;top:337px;" width="27" height="30" viewBox="0 0 27 30"><rect x="1.500" y="1.500" width="23" height="26" rx="2.500" fill="none" stroke="#2d2d2d" stroke-width="2.400"/><path d="M13 8h8M13 14.500h8M13 21h8" stroke="#2d2d2d" stroke-width="2.600"/><path d="M4.500 8l2 2 3.500-4M4.500 14.500l2 2 3.500-4M4.500 21l2 2 3.500-4" fill="none" stroke="#2d2d2d" stroke-width="1.600"/></svg>
<svg class="ico" style="left:13px;top:1405px;" width="34" height="30" viewBox="0 0 34 30"><path d="M3 3h26v9" fill="none" stroke="#2d2d2d" stroke-width="3"/><path d="M3 3v14h7" fill="none" stroke="#2d2d2d" stroke-width="3"/><path d="M3 4h26v6H3z" fill="#2d2d2d"/><circle cx="19" cy="16.500" r="6.500" fill="#f7f7f7" stroke="#2d2d2d" stroke-width="2.800"/><path d="M23.500 21.500l6 6.500" stroke="#2d2d2d" stroke-width="3.600"/></svg>
<div id="panel">
<svg class="ico" style="left:15px;top:21px;" width="26" height="28" viewBox="0 0 26 28"><path d="M2 2.5h22l-8.5 10.5v11l-5-3.5v-7.5z" fill="none" stroke="#333" stroke-width="1.9" stroke-linejoin="round"/></svg>
<div class="abs" style="left:59px;top:11.5px;width:237px;height:43px;border:1px solid #b9b9b9;border-radius:5px;background:#fff"></div>
<div class="t" style="left:69px;top:24.5px;font-size:19px;color:#7b7b7b;font-weight:400;font-style:italic;">Filter by name or type</div>
<div class="t" style="left:6px;top:68.5px;font-size:20.2px;color:#1d1d1d;font-weight:400;font-style:normal;-webkit-text-stroke:0.45px #1d1d1d">Features (42)</div>
<svg class="ico" style="left:158px;top:67px;" width="30" height="24" viewBox="0 0 30 24"><path d="M3 12V3.2c0-.8.5-1.3 1.3-1.3h6.2l2 2.4h13.3c.8 0 1.3.5 1.3 1.3v15c0 .8-.5 1.3-1.3 1.3H13" fill="none" stroke="#b5b5b5" stroke-width="1.5"/><path d="M2 22h3" stroke="#b5b5b5" stroke-width="1.5"/><path d="M8.5 9.5v11M3 15h11" stroke="#7e9fe6" stroke-width="2.4"/></svg>
<div class="abs" style="left:209px;top:68.5px;width:6.5px;height:21px;background:#a9a9a9"></div><div class="abs" style="left:220.5px;top:68.5px;width:6.5px;height:21px;background:#a9a9a9"></div>
<svg class="ico" style="left:249px;top:64px;" width="28" height="30" viewBox="0 0 28 30"><circle cx="14" cy="17" r="10.3" fill="none" stroke="#2b2b2b" stroke-width="3"/><path d="M9.5 2.5h9M14 3v4M21 8l2.2-2.2M14 17l4.2 4.6" fill="none" stroke="#2b2b2b" stroke-width="2.6"/></svg>
<div class="abs" style="left:13.599999999999994px;top:101px;width:1px;height:174px;background:#cfcfcf"></div>
<div class="abs" style="left:7px;top:275px;width:14px;height:1px;background:#cfcfcf"></div>
<div class="abs" style="left:13.599999999999994px;top:355px;width:1px;height:350px;background:#cfcfcf"></div>
<div class="abs" style="left:7px;top:705px;width:14px;height:1px;background:#cfcfcf"></div>
<div class="abs" style="left:13.599999999999994px;top:745px;width:1px;height:86px;background:#cfcfcf"></div>
<div class="abs" style="left:0;top:101px;width:308px;height:900px;overflow:hidden">
</div>
<div class="abs" style="left:0;top:99px;width:308px;height:24px;overflow:hidden"><div style="position:absolute;top:-17px;left:0"><div class="row dim" style="top:0px;"><svg class="ico" style="left:36.5px;top:7px;" width="24" height="24" viewBox="0 0 24 24"><path d="M3.2 18.8l2-5.6L16.3 1.6l3.7 3.3L8.8 16.8z" fill="#fff" stroke="#8d8d8d" stroke-width="1.4" stroke-linejoin="round"/><path d="M5.2 13.2l3.6 3.6" stroke="#8d8d8d" stroke-width="1.1"/><path d="M3.2 18.8l1-2.6 1.7 1.6z" fill="#8d8d8d"/><path d="M0.5 21.7h23" stroke="#7a9fd6" stroke-width="1.5"/></svg><div class="lbl" style="transform:scaleX(0.9997);transform-origin:0 50%;">Bellypan</div></div></div></div>
<div class="row" style="top:120.5px;"><svg class="ico" style="left:36.5px;top:8px;" width="24" height="24" viewBox="0 0 24 24"><path d="M3.5 1h15.5l4 4v17.5H6.5l-5.5-4V3.5z" fill="#fff" stroke="#555" stroke-width="1.3" stroke-linejoin="round"/><path d="M1.2 3.2l5 3.8h16.5M6.2 7v15.3" fill="none" stroke="#777" stroke-width="1"/><path d="M8.5 12.2l3-2.6h11v2.6" fill="#7d7d7d" stroke="#555" stroke-width="1"/><rect x="10.8" y="12.2" width="12" height="10.4" fill="#9c9c9c" stroke="#555" stroke-width="1.1"/><path d="M8.5 12.2v8l2.3 2.3V12.2z" fill="#6e6e6e" stroke="#555" stroke-width="0.9"/></svg><div class="lbl" style="transform:scaleX(0.9997);transform-origin:0 50%;">Bellypan</div></div>
<div class="row" style="top:159.5px;"><svg class="ico" style="left:36.5px;top:8px;" width="24" height="24" viewBox="0 0 24 24"><path d="M12 1.2l10.6 4.6v11.5L12 23 1.4 17.3V5.8z" fill="#c9c9c9" stroke="#9a9a9a" stroke-width="0.8" stroke-linejoin="round"/><path d="M1.4 5.8L12 10.8l10.6-5M12 10.8V23" fill="none" stroke="#a8a8a8" stroke-width="0.8"/><path d="M12 10.8l10.6-5v11.5L12 23z" fill="#b2b2b2"/><path d="M12 10.8L1.4 5.8v11.5L12 23z" fill="#bdbdbd"/><path d="M6 9v9.5M17.8 9v9.5" stroke="#d8d8d8" stroke-width="1.2"/><ellipse cx="12" cy="6.3" rx="5" ry="2.9" fill="#7e7e7e"/><ellipse cx="12" cy="7" rx="3.2" ry="1.7" fill="#9b9b9b"/></svg><div class="lbl" style="transform:scaleX(1.0128);transform-origin:0 50%;">Fillet Bellypan</div><svg class="ico" style="left:234px;top:6.5px;" width="12" height="26" viewBox="0 0 12 26"><circle cx="6" cy="13" r="4.6" fill="#2a2a2a"/><rect x="4.7" y="0.5" width="2.6" height="2.8" fill="#2a2a2a"/><rect x="4.7" y="4.8" width="2.6" height="2.8" fill="#2a2a2a"/><rect x="4.7" y="18.4" width="2.6" height="2.8" fill="#2a2a2a"/><rect x="4.7" y="22.7" width="2.6" height="2.8" fill="#2a2a2a"/></svg></div>
<div class="row dim" style="top:198.5px;"><svg class="ico" style="left:36.5px;top:7px;" width="24" height="24" viewBox="0 0 24 24"><path d="M3.2 18.8l2-5.6L16.3 1.6l3.7 3.3L8.8 16.8z" fill="#fff" stroke="#8d8d8d" stroke-width="1.4" stroke-linejoin="round"/><path d="M5.2 13.2l3.6 3.6" stroke="#8d8d8d" stroke-width="1.1"/><path d="M3.2 18.8l1-2.6 1.7 1.6z" fill="#8d8d8d"/><path d="M0.5 21.7h23" stroke="#7a9fd6" stroke-width="1.5"/></svg><div class="lbl" style="transform:scaleX(0.9584);transform-origin:0 50%;">Rivet Holes</div></div>
<div class="row" style="top:237.5px;"><svg class="ico" style="left:36.5px;top:8px;" width="24" height="24" viewBox="0 0 24 24"><path d="M3.5 1h15.5l4 4v17.5H6.5l-5.5-4V3.5z" fill="#fff" stroke="#555" stroke-width="1.3" stroke-linejoin="round"/><path d="M1.2 3.2l5 3.8h16.5M6.2 7v15.3" fill="none" stroke="#777" stroke-width="1"/><path d="M8.5 12.2l3-2.6h11v2.6" fill="#7d7d7d" stroke="#555" stroke-width="1"/><rect x="10.8" y="12.2" width="12" height="10.4" fill="#9c9c9c" stroke="#555" stroke-width="1.1"/><path d="M8.5 12.2v8l2.3 2.3V12.2z" fill="#6e6e6e" stroke="#555" stroke-width="0.9"/></svg><div class="lbl" style="transform:scaleX(0.9584);transform-origin:0 50%;">Rivet Holes</div></div>
<div class="row f" style="top:276.5px;"><svg class="ico" style="left:5px;top:10px;" width="20" height="20" viewBox="0 0 20 20"><path d="M6 2l8 8-8 8" fill="none" stroke="#444" stroke-width="2.8" stroke-linecap="round" stroke-linejoin="round"/></svg><svg class="ico" style="left:38.5px;top:10.5px;" width="24" height="19" viewBox="0 0 24 19"><path d="M1 2.900c0-.900.600-1.500 1.500-1.500h6l2 2.300h10.600c.900 0 1.500.600 1.500 1.500v11.200c0 .900-.600 1.500-1.500 1.500H2.500c-.900 0-1.500-.600-1.500-1.500z" fill="#fff" stroke="#555" stroke-width="1.400" stroke-linejoin="round"/></svg><div class="lbl" style="transform:scaleX(0.9553);transform-origin:0 50%;">Cross Tube Gusset (2)</div></div>
<div class="row f" style="top:315.5px;"><svg class="ico" style="left:5px;top:10px;" width="20" height="20" viewBox="0 0 20 20"><path d="M2 5l8 8 8-8" fill="none" stroke="#444" stroke-width="3.2" stroke-linecap="round" stroke-linejoin="round"/></svg><svg class="ico" style="left:38.5px;top:10.5px;" width="24" height="19" viewBox="0 0 24 19"><path d="M1 2.900c0-.900.600-1.500 1.500-1.500h6l2 2.300h10.600c.900 0 1.500.600 1.500 1.500v11.200c0 .900-.600 1.500-1.500 1.500H2.500c-.900 0-1.500-.600-1.500-1.500z" fill="#fff" stroke="#555" stroke-width="1.400" stroke-linejoin="round"/></svg><div class="lbl" style="transform:scaleX(0.9868);transform-origin:0 50%;">Battery Plate (9)</div></div>
<div class="row dim" style="top:354.5px;"><svg class="ico" style="left:36.5px;top:7px;" width="24" height="24" viewBox="0 0 24 24"><path d="M3.2 18.8l2-5.6L16.3 1.6l3.7 3.3L8.8 16.8z" fill="#fff" stroke="#8d8d8d" stroke-width="1.4" stroke-linejoin="round"/><path d="M5.2 13.2l3.6 3.6" stroke="#8d8d8d" stroke-width="1.1"/><path d="M3.2 18.8l1-2.6 1.7 1.6z" fill="#8d8d8d"/><path d="M0.5 21.7h23" stroke="#7a9fd6" stroke-width="1.5"/></svg><div class="lbl" style="transform:scaleX(0.9982);transform-origin:0 50%;">Battery Plate</div></div>
<div class="row" style="top:393.5px;"><svg class="ico" style="left:36.5px;top:8px;" width="24" height="24" viewBox="0 0 24 24"><path d="M3.5 1h15.5l4 4v17.5H6.5l-5.5-4V3.5z" fill="#fff" stroke="#555" stroke-width="1.3" stroke-linejoin="round"/><path d="M1.2 3.2l5 3.8h16.5M6.2 7v15.3" fill="none" stroke="#777" stroke-width="1"/><path d="M8.5 12.2l3-2.6h11v2.6" fill="#7d7d7d" stroke="#555" stroke-width="1"/><rect x="10.8" y="12.2" width="12" height="10.4" fill="#9c9c9c" stroke="#555" stroke-width="1.1"/><path d="M8.5 12.2v8l2.3 2.3V12.2z" fill="#6e6e6e" stroke="#555" stroke-width="0.9"/></svg><div class="lbl" style="transform:scaleX(0.9982);transform-origin:0 50%;">Battery Plate</div></div>
<div class="row" style="top:432.5px;"><svg class="ico" style="left:36.5px;top:8px;" width="24" height="24" viewBox="0 0 24 24"><path d="M1.2 10.5C1.2 4.5 5 1.2 11 1.2h8l4 3.6v17.8H5.2l-4-3.6z" fill="#fff" stroke="#555" stroke-width="1.3" stroke-linejoin="round"/><path d="M1.2 10.5C1.2 4.5 5 1.2 11 1.2l3.5 3.3C9.5 4.8 5.3 8 5.2 13.5z" fill="#a9a9a9" stroke="#555" stroke-width="1.1" stroke-linejoin="round"/><path d="M14.5 4.6H23M5.2 13.5v9" fill="none" stroke="#666" stroke-width="1.1"/></svg><div class="lbl" style="transform:scaleX(1.0016);transform-origin:0 50%;">Fillet 1</div></div>
<div class="row" style="top:471.5px;"><svg class="ico" style="left:36.5px;top:8px;" width="24" height="24" viewBox="0 0 24 24"><path d="M1.2 10.5C1.2 4.5 5 1.2 11 1.2h8l4 3.6v17.8H5.2l-4-3.6z" fill="#fff" stroke="#555" stroke-width="1.3" stroke-linejoin="round"/><path d="M1.2 10.5C1.2 4.5 5 1.2 11 1.2l3.5 3.3C9.5 4.8 5.3 8 5.2 13.5z" fill="#a9a9a9" stroke="#555" stroke-width="1.1" stroke-linejoin="round"/><path d="M14.5 4.6H23M5.2 13.5v9" fill="none" stroke="#666" stroke-width="1.1"/></svg><div class="lbl" style="transform:scaleX(1.0134);transform-origin:0 50%;">Fillet 2</div></div>
<div class="row" style="top:510.5px;"><svg class="ico" style="left:36.5px;top:7px;" width="24" height="24" viewBox="0 0 24 24"><path d="M2.5 9.2l19-2 1.4 12.6-19.5 2.6z" fill="#4a4a4a"/><path d="M0.6 12.4l2-.3.5 5-2 .3zM21.2 10.2l2-.3.5 5-2 .3z" fill="#4a4a4a"/><circle cx="8.3" cy="13.6" r="3.3" fill="#fff"/><circle cx="16" cy="12.6" r="3.3" fill="#fff"/><circle cx="9.2" cy="13.8" r="1.5" fill="#4a4a4a"/><circle cx="16.9" cy="12.8" r="1.5" fill="#4a4a4a"/><path d="M10.5 19.2c2.5.6 4.5-.4 5.2-2.2" fill="none" stroke="#fff" stroke-width="1.3" stroke-linecap="round"/><path d="M11.5 8V3.8" stroke="#4a4a4a" stroke-width="1.6"/><circle cx="11.5" cy="3" r="1.6" fill="#4a4a4a"/><path d="M7.2 1.5c-.9 1.2-.9 2.6 0 3.8M5.2.8c-1.4 1.8-1.4 3.6 0 5.4M15.8 1.5c.9 1.2.9 2.6 0 3.8M17.8.8c1.4 1.8 1.4 3.6 0 5.4" fill="none" stroke="#6a6a6a" stroke-width="0.9"/></svg><div class="lbl" style="transform:scaleX(0.9715);transform-origin:0 50%;">Battery Plate S...</div><svg class="ico" style="left:234px;top:6.5px;" width="12" height="26" viewBox="0 0 12 26"><circle cx="6" cy="13" r="4.6" fill="#2a2a2a"/><rect x="4.7" y="0.5" width="2.6" height="2.8" fill="#2a2a2a"/><rect x="4.7" y="4.8" width="2.6" height="2.8" fill="#2a2a2a"/><rect x="4.7" y="18.4" width="2.6" height="2.8" fill="#2a2a2a"/><rect x="4.7" y="22.7" width="2.6" height="2.8" fill="#2a2a2a"/></svg></div>
<div class="row dim" style="top:549.5px;"><svg class="ico" style="left:36.5px;top:7px;" width="24" height="24" viewBox="0 0 24 24"><path d="M3.2 18.8l2-5.6L16.3 1.6l3.7 3.3L8.8 16.8z" fill="#fff" stroke="#8d8d8d" stroke-width="1.4" stroke-linejoin="round"/><path d="M5.2 13.2l3.6 3.6" stroke="#8d8d8d" stroke-width="1.1"/><path d="M3.2 18.8l1-2.6 1.7 1.6z" fill="#8d8d8d"/><path d="M0.5 21.7h23" stroke="#7a9fd6" stroke-width="1.5"/></svg><div class="lbl" style="transform:scaleX(0.9900);transform-origin:0 50%;">Bellypan Cutouts</div></div>
<div class="row" style="top:588.5px;"><svg class="ico" style="left:36.5px;top:8px;" width="24" height="24" viewBox="0 0 24 24"><path d="M3.5 1h15.5l4 4v17.5H6.5l-5.5-4V3.5z" fill="#fff" stroke="#555" stroke-width="1.3" stroke-linejoin="round"/><path d="M1.2 3.2l5 3.8h16.5M6.2 7v15.3" fill="none" stroke="#777" stroke-width="1"/><path d="M8.5 12.2l3-2.6h11v2.6" fill="#7d7d7d" stroke="#555" stroke-width="1"/><rect x="10.8" y="12.2" width="12" height="10.4" fill="#9c9c9c" stroke="#555" stroke-width="1.1"/><path d="M8.5 12.2v8l2.3 2.3V12.2z" fill="#6e6e6e" stroke="#555" stroke-width="0.9"/></svg><div class="lbl" style="transform:scaleX(0.9878);transform-origin:0 50%;">Strap Cutouts</div></div>
<div class="row dim" style="top:627.5px;"><svg class="ico" style="left:36.5px;top:7px;" width="24" height="24" viewBox="0 0 24 24"><path d="M3.2 18.8l2-5.6L16.3 1.6l3.7 3.3L8.8 16.8z" fill="#fff" stroke="#8d8d8d" stroke-width="1.4" stroke-linejoin="round"/><path d="M5.2 13.2l3.6 3.6" stroke="#8d8d8d" stroke-width="1.1"/><path d="M3.2 18.8l1-2.6 1.7 1.6z" fill="#8d8d8d"/><path d="M0.5 21.7h23" stroke="#7a9fd6" stroke-width="1.5"/></svg><div class="lbl" style="transform:scaleX(1.0007);transform-origin:0 50%;">Battery Strap</div></div>
<div class="row" style="top:666.5px;"><svg class="ico" style="left:36.5px;top:8px;" width="24" height="24" viewBox="0 0 24 24"><path d="M3.5 1h15.5l4 4v17.5H6.5l-5.5-4V3.5z" fill="#fff" stroke="#555" stroke-width="1.3" stroke-linejoin="round"/><path d="M1.2 3.2l5 3.8h16.5M6.2 7v15.3" fill="none" stroke="#777" stroke-width="1"/><path d="M8.5 12.2l3-2.6h11v2.6" fill="#7d7d7d" stroke="#555" stroke-width="1"/><rect x="10.8" y="12.2" width="12" height="10.4" fill="#9c9c9c" stroke="#555" stroke-width="1.1"/><path d="M8.5 12.2v8l2.3 2.3V12.2z" fill="#6e6e6e" stroke="#555" stroke-width="0.9"/></svg><div class="lbl" style="transform:scaleX(1.0007);transform-origin:0 50%;">Battery Strap</div></div>
<div class="row f" style="top:705.5px;"><div class="abs" style="left:0;top:2px;width:300px;height:36px;background:#e9eef2;border-bottom:1.500px solid #9ccbec"></div><svg class="ico" style="left:5px;top:10px;" width="20" height="20" viewBox="0 0 20 20"><path d="M2 5l8 8 8-8" fill="none" stroke="#444" stroke-width="3.2" stroke-linecap="round" stroke-linejoin="round"/></svg><svg class="ico" style="left:38.5px;top:10.5px;" width="24" height="19" viewBox="0 0 24 19"><path d="M1 2.900c0-.900.600-1.500 1.500-1.500h6l2 2.300h10.600c.900 0 1.500.600 1.500 1.500v11.200c0 .900-.600 1.500-1.500 1.500H2.500c-.900 0-1.500-.600-1.500-1.500z" fill="#fff" stroke="#555" stroke-width="1.400" stroke-linejoin="round"/></svg><div class="lbl" style="transform:scaleX(0.9981);transform-origin:0 50%;">Electrical Mounting (4)</div></div>
<div class="row" style="top:746.5px;height:35px;width:300px;background:#b5dcf4"><svg class="ico" style="left:36.5px;top:5.5px;" width="24" height="24" viewBox="0 0 24 24"><path d="M3.2 18.8l2-5.6L16.3 1.6l3.7 3.3L8.8 16.8z" fill="#fff" stroke="#5a6b78" stroke-width="1.4" stroke-linejoin="round"/><path d="M5.2 13.2l3.6 3.6" stroke="#5a6b78" stroke-width="1.1"/><path d="M3.2 18.8l1-2.6 1.7 1.6z" fill="#5a6b78"/><path d="M0.5 21.7h23" stroke="#3d74c4" stroke-width="1.5"/></svg><div class="lbl" style="top:8.1px;color:#5b8099;font-weight:700;transform:scaleX(0.951);transform-origin:0 50%">EE Layout</div></div>
<div class="abs" style="left:36px;top:798px;width:257px;height:9px;background:#bdbdbd"></div>
<div class="abs" style="left:37px;top:829px;width:20px;height:2px;background:#ddd"></div>
<div class="abs" style="left:0;top:831px;width:301px;height:2px;background:#d9d9d9"></div>
<svg class="ico" style="left:5px;top:842.5px;" width="20" height="20" viewBox="0 0 20 20"><path d="M2 5l8 8 8-8" fill="none" stroke="#444" stroke-width="3.2" stroke-linecap="round" stroke-linejoin="round"/></svg>
<div class="t" style="left:34.5px;top:842px;font-size:20px;color:#1f1f1f;font-weight:400;font-style:normal;transform:scaleX(0.9685);transform-origin:0 50%;">Parts (11)</div>
<div class="row" style="top:871.5px;"><svg class="ico" style="left:36.5px;top:8px;" width="24" height="24" viewBox="0 0 24 24"><path d="M9.5 1.2h9.3l4 3.6v17.8H5.2l-4-3.6v-7.5h8.3z" fill="#fff" stroke="#555" stroke-width="1.3" stroke-linejoin="round"/><path d="M9.5 1.2l4 3.6h9.3M13.5 4.8v10.3H5.2v7.5M1.2 11.5l4 3.6M9.5 11.5l4 3.6" fill="none" stroke="#666" stroke-width="1.1" stroke-linejoin="round"/></svg><div class="lbl" style="transform:scaleX(0.9520);transform-origin:0 50%;">Origin Cube</div></div>
<div class="row" style="top:910.5px;"><svg class="ico" style="left:36.5px;top:8px;" width="24" height="24" viewBox="0 0 24 24"><path d="M9.5 1.2h9.3l4 3.6v17.8H5.2l-4-3.6v-7.5h8.3z" fill="#fff" stroke="#555" stroke-width="1.3" stroke-linejoin="round"/><path d="M9.5 1.2l4 3.6h9.3M13.5 4.8v10.3H5.2v7.5M1.2 11.5l4 3.6M9.5 11.5l4 3.6" fill="none" stroke="#666" stroke-width="1.1" stroke-linejoin="round"/></svg><div class="lbl" style="transform:scaleX(0.9733);transform-origin:0 50%;">Tube 2"x1"x17.5"</div></div>
<div class="row" style="top:949.5px;"><svg class="ico" style="left:36.5px;top:8px;" width="24" height="24" viewBox="0 0 24 24"><path d="M9.5 1.2h9.3l4 3.6v17.8H5.2l-4-3.6v-7.5h8.3z" fill="#fff" stroke="#555" stroke-width="1.3" stroke-linejoin="round"/><path d="M9.5 1.2l4 3.6h9.3M13.5 4.8v10.3H5.2v7.5M1.2 11.5l4 3.6M9.5 11.5l4 3.6" fill="none" stroke="#666" stroke-width="1.1" stroke-linejoin="round"/></svg><div class="lbl" style="transform:scaleX(0.9733);transform-origin:0 50%;">Tube 2"x1"x17.5"</div></div>
<div class="row" style="top:988.5px;"><svg class="ico" style="left:36.5px;top:8px;" width="24" height="24" viewBox="0 0 24 24"><path d="M9.5 1.2h9.3l4 3.6v17.8H5.2l-4-3.6v-7.5h8.3z" fill="#fff" stroke="#555" stroke-width="1.3" stroke-linejoin="round"/><path d="M9.5 1.2l4 3.6h9.3M13.5 4.8v10.3H5.2v7.5M1.2 11.5l4 3.6M9.5 11.5l4 3.6" fill="none" stroke="#666" stroke-width="1.1" stroke-linejoin="round"/></svg><div class="lbl" style="transform:scaleX(0.9971);transform-origin:0 50%;">Tube 2"x2"x24"</div></div>
<div class="row" style="top:1027.5px;"><svg class="ico" style="left:36.5px;top:8px;" width="24" height="24" viewBox="0 0 24 24"><path d="M9.5 1.2h9.3l4 3.6v17.8H5.2l-4-3.6v-7.5h8.3z" fill="#fff" stroke="#555" stroke-width="1.3" stroke-linejoin="round"/><path d="M9.5 1.2l4 3.6h9.3M13.5 4.8v10.3H5.2v7.5M1.2 11.5l4 3.6M9.5 11.5l4 3.6" fill="none" stroke="#666" stroke-width="1.1" stroke-linejoin="round"/></svg><div class="lbl" style="transform:scaleX(0.9733);transform-origin:0 50%;">Tube 2"x1"x17.5"</div></div>
<div class="row" style="top:1066.5px;"><svg class="ico" style="left:36.5px;top:8px;" width="24" height="24" viewBox="0 0 24 24"><path d="M9.5 1.2h9.3l4 3.6v17.8H5.2l-4-3.6v-7.5h8.3z" fill="#fff" stroke="#555" stroke-width="1.3" stroke-linejoin="round"/><path d="M9.5 1.2l4 3.6h9.3M13.5 4.8v10.3H5.2v7.5M1.2 11.5l4 3.6M9.5 11.5l4 3.6" fill="none" stroke="#666" stroke-width="1.1" stroke-linejoin="round"/></svg><div class="lbl" style="transform:scaleX(0.9733);transform-origin:0 50%;">Tube 2"x1"x17.5"</div></div>
<div class="row" style="top:1105.5px;"><svg class="ico" style="left:36.5px;top:8px;" width="24" height="24" viewBox="0 0 24 24"><path d="M9.5 1.2h9.3l4 3.6v17.8H5.2l-4-3.6v-7.5h8.3z" fill="#fff" stroke="#555" stroke-width="1.3" stroke-linejoin="round"/><path d="M9.5 1.2l4 3.6h9.3M13.5 4.8v10.3H5.2v7.5M1.2 11.5l4 3.6M9.5 11.5l4 3.6" fill="none" stroke="#666" stroke-width="1.1" stroke-linejoin="round"/></svg><div class="lbl" style="transform:scaleX(0.9997);transform-origin:0 50%;">Bellypan</div></div>
<div class="row" style="top:1144.5px;"><svg class="ico" style="left:36.5px;top:8px;" width="24" height="24" viewBox="0 0 24 24"><path d="M9.5 1.2h9.3l4 3.6v17.8H5.2l-4-3.6v-7.5h8.3z" fill="#fff" stroke="#555" stroke-width="1.3" stroke-linejoin="round"/><path d="M9.5 1.2l4 3.6h9.3M13.5 4.8v10.3H5.2v7.5M1.2 11.5l4 3.6M9.5 11.5l4 3.6" fill="none" stroke="#666" stroke-width="1.1" stroke-linejoin="round"/></svg><div class="lbl" style="transform:scaleX(0.9721);transform-origin:0 50%;">Crosstube Gusset</div></div>
<div class="row" style="top:1183.5px;"><svg class="ico" style="left:36.5px;top:8px;" width="24" height="24" viewBox="0 0 24 24"><path d="M9.5 1.2h9.3l4 3.6v17.8H5.2l-4-3.6v-7.5h8.3z" fill="#fff" stroke="#555" stroke-width="1.3" stroke-linejoin="round"/><path d="M9.5 1.2l4 3.6h9.3M13.5 4.8v10.3H5.2v7.5M1.2 11.5l4 3.6M9.5 11.5l4 3.6" fill="none" stroke="#666" stroke-width="1.1" stroke-linejoin="round"/></svg><div class="lbl" style="transform:scaleX(0.9982);transform-origin:0 50%;">Battery Plate</div></div>
<div class="row" style="top:1222.5px;"><svg class="ico" style="left:36.5px;top:8px;" width="24" height="24" viewBox="0 0 24 24"><path d="M9.5 1.2h9.3l4 3.6v17.8H5.2l-4-3.6v-7.5h8.3z" fill="#fff" stroke="#555" stroke-width="1.3" stroke-linejoin="round"/><path d="M9.5 1.2l4 3.6h9.3M13.5 4.8v10.3H5.2v7.5M1.2 11.5l4 3.6M9.5 11.5l4 3.6" fill="none" stroke="#666" stroke-width="1.1" stroke-linejoin="round"/></svg><div class="lbl" style="transform:scaleX(0.9490);transform-origin:0 50%;">2 in. Round Spacer</div></div>
<div class="row" style="top:1261.5px;"><svg class="ico" style="left:36.5px;top:8px;" width="24" height="24" viewBox="0 0 24 24"><path d="M9.5 1.2h9.3l4 3.6v17.8H5.2l-4-3.6v-7.5h8.3z" fill="#fff" stroke="#555" stroke-width="1.3" stroke-linejoin="round"/><path d="M9.5 1.2l4 3.6h9.3M13.5 4.8v10.3H5.2v7.5M1.2 11.5l4 3.6M9.5 11.5l4 3.6" fill="none" stroke="#666" stroke-width="1.1" stroke-linejoin="round"/></svg><div class="lbl" style="transform:scaleX(1.0007);transform-origin:0 50%;">Battery Strap</div></div>
</div>
<svg class="ico" style="left:2302px;top:144px;font-family:'Liberation Sans',sans-serif;overflow:visible" width="250" height="225" viewBox="0 0 250 225"><path d="M92 63h62l9 9v62l-9 9H92l-9-9V72z" fill="#dfe4e8"/><rect x="88" y="71" width="67" height="67" rx="14" fill="#fff" opacity="0.97"/><circle cx="86" cy="70" r="5.500" fill="#fff"/><circle cx="86" cy="139" r="5.500" fill="#fff"/><circle cx="158" cy="139" r="5.500" fill="#fff"/><path d="M76 62v89h88" fill="none" stroke="none"/><path d="M76 62.500v88.500" stroke="#22aa22" stroke-width="1.600"/><path d="M76 151h88" stroke="#e53535" stroke-width="1.600"/><text x="75" y="52" font-size="18" text-anchor="middle" fill="#35c535" opacity="0.8">Y</text><text x="180" y="157" font-size="18" text-anchor="middle" fill="#e95050">X</text><text x="122" y="110" font-size="19.500" text-anchor="middle" fill="#444" textLength="30" lengthAdjust="spacingAndGlyphs">Top</text><path d="M122 -5l10 13h-20zM122 215l10-13h-20zM233 103l-12-10v20zM11 103l12-10v20z" fill="#dfe4e8" opacity="0.9"/><path d="M154 12c18 4 32 14 40 26" fill="none" stroke="#dfe4e8" stroke-width="6"/><path d="M186 38l16 2-2-16z" fill="#dfe4e8"/><path d="M90 12c-18 4-32 14-40 26" fill="none" stroke="#dfe4e8" stroke-width="6" opacity="0.7"/><path d="M90 5l6 10-14 2z" fill="#dfe4e8" opacity="0.7"/></svg><svg class="ico" style="left:2476px;top:333px;" width="30" height="30" viewBox="0 0 30 30"><path d="M15 2l12.500 4.500v15L15 28 2.500 21.500v-15z" fill="#fff" stroke="#333" stroke-width="1.300" stroke-linejoin="round"/><path d="M2.500 6.500L15 11.500V28L2.500 21.500z" fill="#9a9a9a"/><path d="M15 11.500l12.500-5v15L15 28z" fill="#d9d9d9"/><path d="M2.500 6.500L15 11.500l12.500-5M15 11.500V28" fill="none" stroke="#333" stroke-width="1.200"/></svg><div class="abs" style="left:2517px;top:345px;width:0;height:0;border-left:6px solid transparent;border-right:6px solid transparent;border-top:6px solid #222"></div>
<div class="abs" style="left:369px;top:119px;width:330px;height:327.600px;background:rgba(255,255,255,0.945);box-shadow:0 6px 14px rgba(0,0,0,0.28)"></div><div class="abs" style="left:657px;top:119px;width:42px;height:42px;background:#fff"></div>
<div class="abs" style="left:369px;top:119px;width:289.500px;height:327.600px;background:#fff"></div>
<div class="abs" style="left:369px;top:161px;width:330px;height:1px;background:#d5d5d5"></div>
<div class="t" style="left:378px;top:131px;font-size:20px;color:#1f1f1f;font-weight:400;font-style:normal;-webkit-text-stroke:0.55px #1f1f1f;letter-spacing:-0.35px">EE Layout</div>
<div class="abs" style="left:615px;top:119px;width:42.200px;height:42.200px;background:#0b8a10"></div>
<svg class="ico" style="left:621px;top:126px;" width="30" height="28" viewBox="0 0 30 28"><path d="M4.500 14.500l7.500 7.500L26 6.500" fill="none" stroke="#fff" stroke-width="4.600"/></svg>
<svg class="ico" style="left:666px;top:129px;" width="24" height="24" viewBox="0 0 24 24"><path d="M4 4l16 16M20 4L4 20" stroke="#c9283d" stroke-width="4.600"/></svg>
<div class="abs" style="left:374px;top:170px;width:282px;height:64px;border:1px solid #dadada;border-bottom:1px solid #c8c8c8;border-radius:3px;background:#fff"></div>
<div class="t" style="left:383px;top:179.5px;font-size:14.9px;color:#555;font-weight:400;font-style:normal;">Sketch plane</div>
<div class="t" style="left:384.3px;top:207.2px;font-size:18.9px;color:#474747;font-weight:400;font-style:normal;letter-spacing:0.22px">Face of Bellypan</div>
<svg class="ico" style="left:624px;top:208px;" width="16" height="16" viewBox="0 0 16 16"><path d="M3 3l10 10M13 3L3 13" stroke="#444" stroke-width="1.700"/></svg>
<svg class="ico" style="left:660px;top:173px;" width="30" height="30" viewBox="0 0 30 30"><circle cx="15" cy="15" r="13.200" fill="none" stroke="#333" stroke-width="1.400"/><circle cx="15" cy="15" r="9.800" fill="none" stroke="#333" stroke-width="1.400"/><path d="M15 5.200V15h9.800" fill="none" stroke="#333" stroke-width="1.400"/></svg>
<div class="abs" style="left:375px;top:253px;width:18px;height:18px;background:#1b52b2;border-radius:4px"></div>
<svg class="ico" style="left:375px;top:253px;" width="18" height="18" viewBox="0 0 18 18"><path d="M4 9.200l3.500 3.600L14 5.500" fill="none" stroke="#fff" stroke-width="2.600"/></svg>
<div class="t" style="left:399.5px;top:254.1px;font-size:19.3px;color:#555;font-weight:400;font-style:normal;letter-spacing:0.29px">Disable imprinting</div>
<div class="abs" style="left:375px;top:294px;width:18px;height:18px;background:#fff;border:1.300px solid #8a8a8a;border-radius:3.500px"></div>
<div class="t" style="left:399.5px;top:295.1px;font-size:19.3px;color:#555;font-weight:400;font-style:normal;letter-spacing:0.29px">Show constraints</div>
<div class="abs" style="left:375px;top:335px;width:18px;height:18px;background:#1b52b2;border-radius:4px"></div>
<svg class="ico" style="left:375px;top:335px;" width="18" height="18" viewBox="0 0 18 18"><path d="M4 9.200l3.500 3.600L14 5.500" fill="none" stroke="#fff" stroke-width="2.600"/></svg>
<div class="t" style="left:399.5px;top:336.1px;font-size:19.3px;color:#555;font-weight:400;font-style:normal;letter-spacing:0.29px">Show expressions</div>
<div class="abs" style="left:375px;top:376px;width:18px;height:18px;background:#1b52b2;border-radius:4px"></div>
<svg class="ico" style="left:375px;top:376px;" width="18" height="18" viewBox="0 0 18 18"><path d="M4 9.200l3.500 3.600L14 5.500" fill="none" stroke="#fff" stroke-width="2.600"/></svg>
<div class="t" style="left:399.5px;top:377.1px;font-size:19.3px;color:#555;font-weight:400;font-style:normal;letter-spacing:0.29px">Show errors</div>
<div class="abs" style="left:627px;top:410px;width:33px;height:33px;border:1px solid #b4b4b4;border-radius:5px;background:#fff"></div>
<svg class="ico" style="left:629px;top:412px;" width="30" height="30" viewBox="0 0 30 30"><circle cx="15.100" cy="13.800" r="12.600" fill="none" stroke="#222" stroke-width="1.500"/><path d="M9.330 18.980L14.800 7.770 19.760 3.080M9.330 18.980L21.060 14.290 25.240 8.550M14.800 7.770L21.060 14.290" fill="none" stroke="#222" stroke-width="1.600" stroke-linejoin="round"/><path d="M9.330 18.980l1.500-3 1.600 1.800z" fill="#222"/><path d="M6.200 20.800h19.300" stroke="#1d4fb0" stroke-width="2.300"/><path d="M23.700 23.200l3.400 2.600" stroke="#333" stroke-width="3.400" stroke-linecap="round"/></svg>
<svg class="ico" style="left:672.4px;top:420.5px;" width="20" height="20" viewBox="0 0 20 20"><circle cx="10" cy="10" r="9.400" fill="#a6a6a6"/><path d="M6.800 7.800c0-2 1.400-3 3.200-3s3.200 1 3.200 2.800c0 2.200-2.700 2.300-2.700 4.500" fill="none" stroke="#fff" stroke-width="2.300"/><rect x="9.200" y="13.800" width="2.500" height="2.500" fill="#fff"/></svg>
<div class="abs" style="left:369px;top:716px;width:48px;height:50px;border:1px solid #c9c9c9;border-left:none;background:#fff"></div>
<svg class="ico" style="left:378px;top:727px;" width="30" height="32" viewBox="0 0 30 32"><path d="M2 5l2.500 2.500L7 5" fill="none" stroke="#222" stroke-width="1.600"/><path d="M4.500 9v20" stroke="#222" stroke-width="1.600"/><path d="M9 6.500h19M9 13.500h19M9 20.500h19M9 27.500h19" stroke="#222" stroke-width="1.600"/></svg>
<div class="abs" style="left:2511px;top:485px;width:60px;height:200px;border:1px solid #b0b0b0;background:#fff"></div>
<div class="abs" style="left:2511px;top:534.7px;width:60px;height:1px;background:#b0b0b0"></div>
<div class="abs" style="left:2511px;top:584.4px;width:60px;height:1px;background:#b0b0b0"></div>
<div class="abs" style="left:2511px;top:634.1px;width:60px;height:1px;background:#b0b0b0"></div>
<svg class="ico" style="left:2519px;top:496px;" width="34" height="34" viewBox="0 0 34 34"><path d="M5 19L14 4.500c1-1.500 3-1.500 4.500-.500l3 2z" fill="#666"/><path d="M9 19L21.500 6.500l6 4c1.500 1 1.500 2.500.500 4L24 19z" fill="#999"/><path d="M13 19l7-7.500 4 7.500z" fill="#c6c6c6"/><rect x="3.500" y="20" width="27" height="9" rx="1.500" fill="#fff" stroke="#444" stroke-width="1.300"/><path d="M12.500 20v9M21.500 20v9" stroke="#444" stroke-width="1.100"/><rect x="22" y="20.600" width="8" height="7.800" fill="#d0d0d0"/><circle cx="8" cy="24.500" r="1.600" fill="none" stroke="#444" stroke-width="1"/></svg>
<svg class="ico" style="left:2519px;top:544px;" width="34" height="36" viewBox="0 0 34 36"><g transform="translate(2,0)"><path d="M18 12l10.500 4.500v11L18.500 32 7 27.500v-11z" fill="#fff" stroke="#2a2a2a" stroke-width="1.700" stroke-linejoin="round"/><path d="M7 16.500l11.500 4.500 10-4.500M18.500 21v11" fill="none" stroke="#2a2a2a" stroke-width="1.700"/></g><rect x="1" y="3" width="15" height="11.500" fill="#2a6fd0"/><rect x="2.3" y="4.3" width="3.300" height="2.300" fill="#fff" opacity="0.55"/><rect x="2.3" y="7.8" width="3.300" height="2.300" fill="#fff" opacity="0.55"/><rect x="2.3" y="11.3" width="3.300" height="2.300" fill="#fff" opacity="0.55"/><rect x="6.8" y="4.3" width="3.300" height="2.300" fill="#fff" opacity="0.55"/><rect x="6.8" y="7.8" width="3.300" height="2.300" fill="#fff" opacity="0.55"/><rect x="6.8" y="11.3" width="3.300" height="2.300" fill="#fff" opacity="0.55"/><rect x="11.3" y="4.3" width="3.300" height="2.300" fill="#fff" opacity="0.55"/><rect x="11.3" y="7.8" width="3.300" height="2.300" fill="#fff" opacity="0.55"/><rect x="11.3" y="11.3" width="3.300" height="2.300" fill="#fff" opacity="0.55"/></svg>
<svg class="ico" style="left:2519px;top:594px;" width="34" height="36" viewBox="0 0 34 36"><g transform="translate(4.500,6) scale(0.72)"><path d="M18 12l10.500 4.500v11L18.500 32 7 27.500v-11z" fill="#fff" stroke="#2a2a2a" stroke-width="1.700" stroke-linejoin="round"/><path d="M7 16.500l11.500 4.500 10-4.500M18.500 21v11" fill="none" stroke="#2a2a2a" stroke-width="1.700"/></g><rect x="1" y="1" width="15" height="11.500" fill="#3a3a3a"/><rect x="2.3" y="2.3" width="3.300" height="2.300" fill="#fff" opacity="0.55"/><rect x="2.3" y="5.8" width="3.300" height="2.300" fill="#fff" opacity="0.55"/><rect x="2.3" y="9.3" width="3.300" height="2.300" fill="#fff" opacity="0.55"/><rect x="6.8" y="2.3" width="3.300" height="2.300" fill="#fff" opacity="0.55"/><rect x="6.8" y="5.8" width="3.300" height="2.300" fill="#fff" opacity="0.55"/><rect x="6.8" y="9.3" width="3.300" height="2.300" fill="#fff" opacity="0.55"/><rect x="11.3" y="2.3" width="3.300" height="2.300" fill="#fff" opacity="0.55"/><rect x="11.3" y="5.8" width="3.300" height="2.300" fill="#fff" opacity="0.55"/><rect x="11.3" y="9.3" width="3.300" height="2.300" fill="#fff" opacity="0.55"/><path d="M6 14c-2 0-2 1-2 3v3c0 1.500-.500 2-2 2.500 1.500.500 2 1 2 2.500v3c0 2 0 3 2 3M27 4c2 0 2 1 2 3v8c0 1.500.500 2 2 2.500-1.500.500-2 1-2 2.500v8c0 2 0 3-2 3" fill="none" stroke="#2a2a2a" stroke-width="1.600"/></svg>
<svg class="ico" style="left:2519px;top:644px;" width="36" height="36" viewBox="0 0 36 36"><rect x="1" y="1" width="15" height="11.500" fill="#3a3a3a"/><rect x="2.3" y="2.3" width="3.300" height="2.300" fill="#fff" opacity="0.55"/><rect x="2.3" y="5.8" width="3.300" height="2.300" fill="#fff" opacity="0.55"/><rect x="2.3" y="9.3" width="3.300" height="2.300" fill="#fff" opacity="0.55"/><rect x="6.8" y="2.3" width="3.300" height="2.300" fill="#fff" opacity="0.55"/><rect x="6.8" y="5.8" width="3.300" height="2.300" fill="#fff" opacity="0.55"/><rect x="6.8" y="9.3" width="3.300" height="2.300" fill="#fff" opacity="0.55"/><rect x="11.3" y="2.3" width="3.300" height="2.300" fill="#fff" opacity="0.55"/><rect x="11.3" y="5.8" width="3.300" height="2.300" fill="#fff" opacity="0.55"/><rect x="11.3" y="9.3" width="3.300" height="2.300" fill="#fff" opacity="0.55"/><path d="M5 14c-3.500 5-3.500 12 0 17M30 7c4 7 4 17 0 24" fill="none" stroke="#2a2a2a" stroke-width="2.600"/><text x="17.500" y="29" font-size="30" font-style="italic" font-weight="700" text-anchor="middle" font-family="'Liberation Serif',serif" fill="#2a2a2a">x</text></svg>
<div class="abs" style="left:2511px;top:700px;width:60px;height:298px;border:1px solid #b0b0b0;background:#fff"></div>
<div class="abs" style="left:2511px;top:749.6px;width:60px;height:1px;background:#b0b0b0"></div>
<div class="abs" style="left:2511px;top:799.2px;width:60px;height:1px;background:#b0b0b0"></div>
<div class="abs" style="left:2511px;top:848.8px;width:60px;height:1px;background:#b0b0b0"></div>
<div class="abs" style="left:2511px;top:898.4px;width:60px;height:1px;background:#b0b0b0"></div>
<div class="abs" style="left:2511px;top:948.0px;width:60px;height:1px;background:#b0b0b0"></div>
<div class="abs" style="left:2518.500px;top:707.5px;width:35.500px;height:35.500px;background:#dedede;border-radius:5px"></div>
<div class="abs" style="left:2518.500px;top:757.1px;width:35.500px;height:35.500px;background:#dedede;border-radius:5px"></div>
<div class="abs" style="left:2518.500px;top:806.7px;width:35.500px;height:35.500px;background:#dedede;border-radius:5px"></div>
<div class="abs" style="left:2518.500px;top:856.3px;width:35.500px;height:35.500px;background:#dedede;border-radius:5px"></div>
<div class="abs" style="left:2518.500px;top:905.9px;width:35.500px;height:35.500px;background:#dedede;border-radius:5px"></div>
<div class="abs" style="left:2518.500px;top:955.5px;width:35.500px;height:35.500px;background:#dedede;border-radius:5px"></div>
<svg class="ico" style="left:2521px;top:711.0px;" width="30" height="29" viewBox="0 0 30 29"><rect x="1" y="1" width="28" height="27" fill="#0f5fe0" stroke="#111" stroke-width="2"/><text x="15" y="23" font-size="21" font-weight="700" text-anchor="middle" font-family="'Liberation Serif',serif" fill="#fff" textLength="25" lengthAdjust="spacingAndGlyphs">MK</text></svg>
<svg class="ico" style="left:2520.5px;top:759.1px;" width="32" height="32" viewBox="0 0 32 32"><path d="M3 14l25-2 1.500 14-25 3z" fill="#2d3338"/><path d="M1 17.500l2-.300.700 6-2 .300zM28 15.500l2-.300.700 6-2 .300z" fill="#2d3338"/><circle cx="10.500" cy="19.500" r="4" fill="#fff"/><circle cx="21" cy="18.500" r="4" fill="#fff"/><circle cx="11.500" cy="19.500" r="2.300" fill="#2668d8"/><circle cx="22" cy="18.500" r="2.300" fill="#2668d8"/><path d="M13.500 25.500c3 .800 5.500-.500 6.500-3" fill="none" stroke="#fff" stroke-width="1.500" stroke-linecap="round"/><path d="M15.500 13V6" stroke="#2d3338" stroke-width="2"/><circle cx="15.500" cy="5" r="2.200" fill="#2d3338"/><path d="M10.500 3c-1.200 1.600-1.200 3.400 0 5M8 2c-2 2.400-2 4.800 0 7.200M20.500 3c1.200 1.600 1.200 3.400 0 5M23 2c2 2.400 2 4.800 0 7.200" fill="none" stroke="#2668d8" stroke-width="1.100"/></svg>
<div class="abs" style="left:2521px;top:809.2px;width:30.500px;height:30.500px;background:#fff;border-radius:3px"></div>
<svg class="ico" style="left:2521px;top:809.7px;" width="31" height="30" viewBox="0 0 31 30"><path d="M13 4c-2.500 0-3 1-3 3v5c0 2-1 3-2.500 3 1.500 0 2.500 1 2.500 3v5c0 2 .500 3 3 3" fill="none" stroke="#2a2a2a" stroke-width="1.600"/><path d="M10 15H3M6.500 11.500L3 15l3.500 3.500" fill="none" stroke="#2a2a2a" stroke-width="1.600"/><path d="M21.500 8.500l6.500 3v7l-6.500 3.500-6.500-3.500v-7z" fill="#fff" stroke="#2a2a2a" stroke-width="1.400" stroke-linejoin="round"/><path d="M15 11.500l6.500 3 6.500-3M21.500 14.500V22" fill="none" stroke="#2a2a2a" stroke-width="1.400"/></svg>
<svg class="ico" style="left:2520.5px;top:859.3px;" width="32" height="30" viewBox="0 0 32 30"><path d="M16 3l13.500 25H20c0-5-2-7.500-6-9.500s-3-5.500-1.500-9z" fill="#1f9fe0"/><path d="M10.500 14.500C8 19 5 24.500 2.500 28h12.500c0-3-.500-5-3-7s-2.500-4-1.500-6.500z" fill="#1f9fe0"/></svg>
<svg class="ico" style="left:2521px;top:908.9px;" width="30" height="30" viewBox="0 0 30 30"><rect x="1" y="1" width="28" height="28" fill="#49a84c" stroke="#49a84c" stroke-width="2"/><path d="M4.500 7c3.500-1 7-1 10 1v15.500c-3-2-6.500-2-10-1zM25.500 7c-3.500-1-7-1-10 1v15.500c3-2 6.500-2 10-1z" fill="#fff" stroke="#222" stroke-width="0"/></svg>
<svg class="ico" style="left:2521px;top:958.5px;" width="30" height="30" viewBox="0 0 30 30"><rect x="1" y="1" width="28" height="28" fill="#0f5fe0" stroke="#111" stroke-width="2"/><path d="M4.500 7c3.500-1 7-1 10 1v15.500c-3-2-6.500-2-10-1zM25.500 7c-3.500-1-7-1-10 1v15.500c3-2 6.500-2 10-1z" fill="#fff" stroke="#222" stroke-width="1.2"/></svg>
<svg class="ico" style="left:2411px;top:1364px;" width="27" height="20" viewBox="0 0 27 20"><path d="M1.300 18.500V11.200H14" fill="none" stroke="#2b2b2b" stroke-width="1.500"/><path d="M1.300 18.500H17.500c4 0 6.700-2.200 6.700-5V6.800" fill="none" stroke="#2b2b2b" stroke-width="1.500"/><ellipse cx="16.700" cy="6.800" rx="7.600" ry="5.300" fill="#fff" stroke="#2b2b2b" stroke-width="1.500"/><ellipse cx="16.700" cy="6.600" rx="3.900" ry="2.200" fill="none" stroke="#2b2b2b" stroke-width="1.300"/><path d="M9.100 7.500v4" stroke="#2b2b2b" stroke-width="1.500"/><path d="M3.0 18.3v-3.2" stroke="#2b2b2b" stroke-width="0.9"/><path d="M5.3 18.3v-2.0" stroke="#2b2b2b" stroke-width="0.9"/><path d="M7.6 18.3v-3.2" stroke="#2b2b2b" stroke-width="0.9"/><path d="M9.9 18.3v-2.0" stroke="#2b2b2b" stroke-width="0.9"/><path d="M12.2 18.3v-3.2" stroke="#2b2b2b" stroke-width="0.9"/><path d="M14.5 18.3v-2.0" stroke="#2b2b2b" stroke-width="0.9"/><path d="M16.8 18.3v-3.2" stroke="#2b2b2b" stroke-width="0.9"/><path d="M19.1 18.3v-2.0" stroke="#2b2b2b" stroke-width="0.9"/></svg>
<svg class="ico" style="left:2462px;top:1364px;" width="31" height="21" viewBox="0 0 31 21"><path d="M1.600 19.700C.900 19.700.700 19.200.800 18.400L1 15.200A14.200 14.200 0 0 1 29.400 15.200L29.600 18.400C29.700 19.200 29.500 19.700 28.800 19.700Z" fill="#fff" stroke="#2b2b2b" stroke-width="1.500" stroke-linejoin="round"/><path d="M5.700 16.400a9.500 9.500 0 0 1 19 0h-5.700a3.800 3.800 0 0 0-7.600 0z" fill="#fff" stroke="#2b2b2b" stroke-width="1.400" stroke-linejoin="round"/><path d="M28.2 15.6L26.2 15.6" stroke="#2b2b2b" stroke-width="0.800"/><path d="M28.0 13.1L26.0 13.5" stroke="#2b2b2b" stroke-width="0.800"/><path d="M27.2 10.6L25.4 11.4" stroke="#2b2b2b" stroke-width="0.800"/><path d="M26.0 8.4L24.3 9.5" stroke="#2b2b2b" stroke-width="0.800"/><path d="M24.4 6.4L23.0 7.8" stroke="#2b2b2b" stroke-width="0.800"/><path d="M22.4 4.8L21.3 6.5" stroke="#2b2b2b" stroke-width="0.800"/><path d="M20.2 3.6L19.4 5.4" stroke="#2b2b2b" stroke-width="0.800"/><path d="M17.7 2.8L17.3 4.8" stroke="#2b2b2b" stroke-width="0.800"/><path d="M15.2 2.6L15.2 4.6" stroke="#2b2b2b" stroke-width="0.800"/><path d="M12.7 2.8L13.1 4.8" stroke="#2b2b2b" stroke-width="0.800"/><path d="M10.2 3.6L11.0 5.4" stroke="#2b2b2b" stroke-width="0.800"/><path d="M8.0 4.8L9.1 6.5" stroke="#2b2b2b" stroke-width="0.800"/><path d="M6.0 6.4L7.4 7.8" stroke="#2b2b2b" stroke-width="0.800"/><path d="M4.4 8.4L6.1 9.5" stroke="#2b2b2b" stroke-width="0.800"/><path d="M3.2 10.6L5.0 11.4" stroke="#2b2b2b" stroke-width="0.800"/><path d="M2.4 13.1L4.4 13.5" stroke="#2b2b2b" stroke-width="0.800"/><path d="M2.2 15.6L4.2 15.6" stroke="#2b2b2b" stroke-width="0.800"/></svg>
<svg class="ico" style="left:2517px;top:1362.5px;" width="24" height="23" viewBox="0 0 24 23"><path d="M4 1.800h16" stroke="#2b2b2b" stroke-width="1.500"/><path d="M12 1.800v17" stroke="#2b2b2b" stroke-width="1.600"/><path d="M1.500 20.300h21" stroke="#2b2b2b" stroke-width="2.700"/><path d="M5.200 2.500L1.800 13.800h6.800zM18.800 2.500L15.400 13.800h6.800z" fill="none" stroke="#2b2b2b" stroke-width="1.200" stroke-linejoin="round"/><path d="M1.500 14.200h7.400M15.100 14.200h7.400" stroke="#2b2b2b" stroke-width="2.200"/></svg>
<div id="tabs"></div>
<div class="abs" style="left:59px;top:1395px;width:51px;height:43px;background:#d0d0d0"></div>
<svg class="ico" style="left:72px;top:1404px;" width="26" height="26" viewBox="0 0 26 26"><path d="M13 2.500v21M2.500 13h21" stroke="#3a3a3a" stroke-width="3.400"/></svg>
<svg class="ico" style="left:110px;top:1395px;" width="240" height="43" viewBox="0 0 240 43"><path d="M0 0h47l9 21.500-9 21.500H0z" fill="#e3e3e3"/><path d="M49 0h180l9 21.500-9 21.500H49l9-21.500z" fill="#e9e9e9"/></svg>
<svg class="ico" style="left:122px;top:1399px;" width="32" height="30" viewBox="0 0 32 30"><path d="M16 1.500L1.500 14.500h3.500V29h8v-9h6v9h8V14.500h3.500L25 9V3.500h-3.500v2.500z" fill="#4a4a4a"/></svg>
<svg class="ico" style="left:189px;top:1402px;" width="29" height="23" viewBox="0 0 29 23"><path d="M1.300 3.200c0-1 .700-1.700 1.700-1.700h7l2.500 2.800h13c1 0 1.700.700 1.700 1.700v14c0 1-.700 1.700-1.700 1.700H3c-1 0-1.700-.700-1.700-1.700z" fill="#fafafa" stroke="#555" stroke-width="1.400"/></svg>
<div class="t" style="left:225.5px;top:1405.2px;font-size:20px;color:#6a6a6a;font-weight:400;font-style:normal;letter-spacing:0.45px">Drivetrain</div>
<div class="abs" style="left:350px;top:1395px;width:298px;height:43px;background:#fff;border-radius:0 0 8px 8px;border-bottom:3px solid #1d5bbf"></div>
<svg class="ico" style="left:366px;top:1402px;" width="28" height="28" viewBox="0 0 28 28"><path d="M2 8l5-3h5v19l-5 2.500H2z" fill="#fff" stroke="#444" stroke-width="1.400" stroke-linejoin="round"/><path d="M7 5v21.500" stroke="#444" stroke-width="1.200"/><path d="M12 5.500l4-3.500h8.500v21L20 26.500h-8" fill="#fff" stroke="#444" stroke-width="1.400" stroke-linejoin="round"/><path d="M16.500 5.500h-4.500M20 5.500V26.500M20 5.500l4.500-3.500" fill="none" stroke="#444" stroke-width="1.200"/></svg>
<div class="t" style="left:399.5px;top:1406.4px;font-size:20px;color:#2b2b2b;font-weight:400;font-style:normal;letter-spacing:0.45px">Drivetrain</div>
<div class="abs" style="left:653px;top:1395px;width:297px;height:43px;background:#e3e3e3;border-radius:0 0 8px 8px;border-right:1px solid #c8c8c8"></div>
<svg class="ico" style="left:667px;top:1400px;" width="30" height="30" viewBox="0 0 30 30"><path d="M3 3h17l7 6v18H10l-7-6z" fill="#f4f4f4" stroke="#444" stroke-width="1.400" stroke-linejoin="round"/><path d="M3 3l7 6h17M10 9v18" fill="none" stroke="#444" stroke-width="1.200"/><path d="M6 7.500l5-3h10l-1 4 1 10-6 3-9-4z" fill="#8a8a8a"/><path d="M6 7.500l9 3v11M15 10.500l6-2" fill="none" stroke="#555" stroke-width="1"/></svg>
<div class="t" style="left:702px;top:1406.4px;font-size:20px;color:#555;font-weight:400;font-style:normal;letter-spacing:0.5px">Drivetrain Assembly</div>
<div class="abs" style="left:956px;top:1395px;width:298px;height:43px;background:#e3e3e3;border-radius:0 0 8px 8px;border-right:1px solid #c8c8c8"></div>
<svg class="ico" style="left:971px;top:1402px;" width="28" height="28" viewBox="0 0 28 28"><path d="M2 8l5-3h5v19l-5 2.500H2z" fill="#fff" stroke="#444" stroke-width="1.400" stroke-linejoin="round"/><path d="M7 5v21.500" stroke="#444" stroke-width="1.200"/><path d="M12 5.500l4-3.500h8.500v21L20 26.500h-8" fill="#fff" stroke="#444" stroke-width="1.400" stroke-linejoin="round"/><path d="M16.500 5.500h-4.500M20 5.500V26.500M20 5.500l4.500-3.500" fill="none" stroke="#444" stroke-width="1.200"/></svg>
<div class="t" style="left:1005px;top:1406.4px;font-size:20px;color:#555;font-weight:400;font-style:normal;letter-spacing:0.5px">Bumpers</div>
<div class="abs" style="left:1259px;top:1395px;width:298px;height:43px;background:#e3e3e3;border-radius:0 0 8px 8px;border-right:1px solid #c8c8c8"></div>
<svg class="ico" style="left:1273px;top:1400px;" width="30" height="30" viewBox="0 0 30 30"><path d="M3 3h17l7 6v18H10l-7-6z" fill="#f4f4f4" stroke="#444" stroke-width="1.400" stroke-linejoin="round"/><path d="M3 3l7 6h17M10 9v18" fill="none" stroke="#444" stroke-width="1.200"/><path d="M6 7.500l5-3h10l-1 4 1 10-6 3-9-4z" fill="#8a8a8a"/><path d="M6 7.500l9 3v11M15 10.500l6-2" fill="none" stroke="#555" stroke-width="1"/></svg>
<div class="t" style="left:1308px;top:1406.4px;font-size:20px;color:#555;font-weight:400;font-style:normal;letter-spacing:0.5px">Bumper Assembly</div>
</body></html>
